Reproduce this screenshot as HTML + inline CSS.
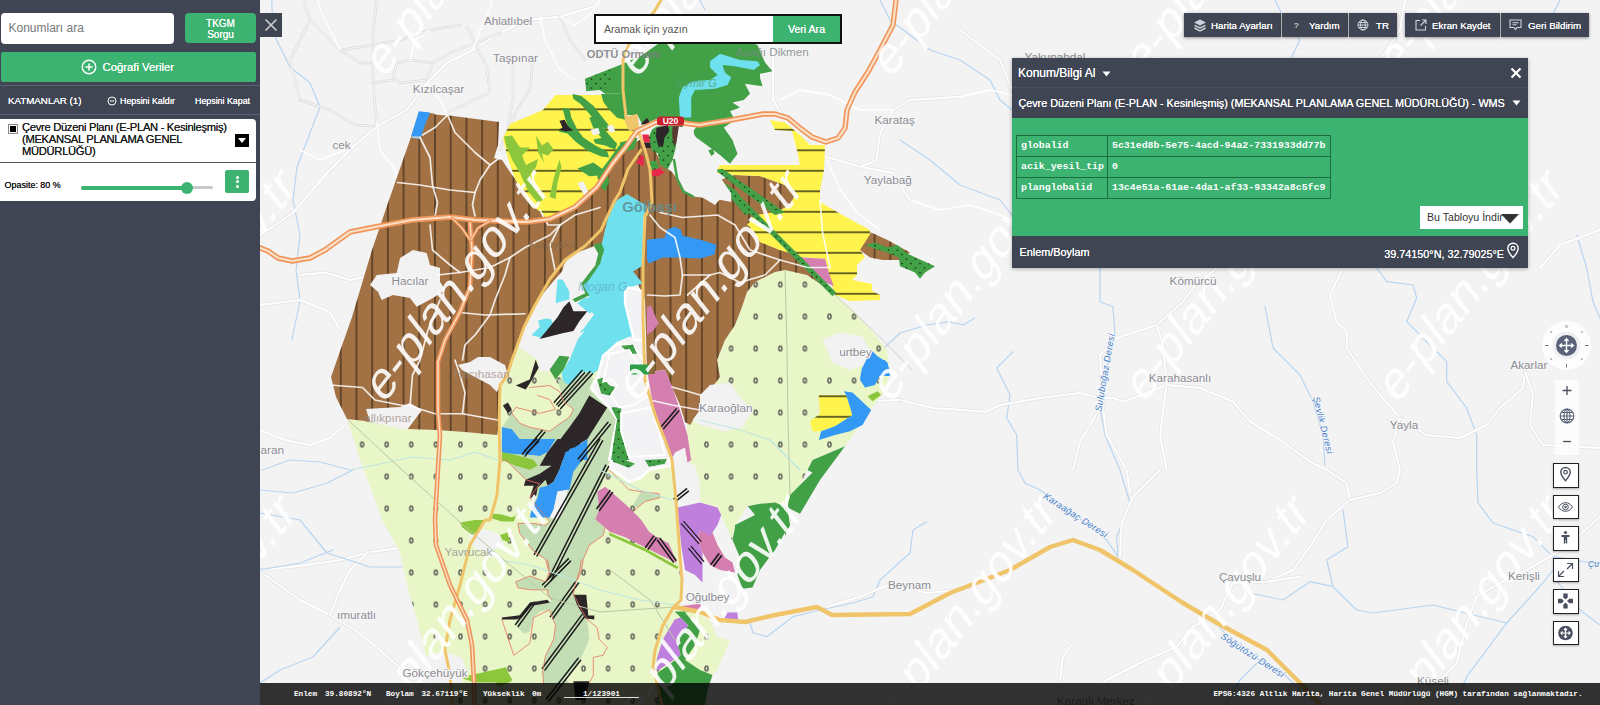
<!DOCTYPE html>
<html lang="tr">
<head>
<meta charset="utf-8">
<title>HGM Atlas</title>
<style>
*{box-sizing:border-box;margin:0;padding:0}
html,body{width:1600px;height:705px;overflow:hidden;background:#f4f3f4;font-family:"Liberation Sans",Arial,sans-serif;}
#app{position:relative;width:1600px;height:705px;overflow:hidden}
#map{position:absolute;left:0;top:0;width:1600px;height:705px}
.abs{position:absolute}
#side{position:absolute;left:0;top:0;width:260px;height:705px;background:#3f4553;color:#fff}
#q{position:absolute;left:1px;top:13px;width:173px;height:31px;background:#fff;border-radius:4px;color:#777;font-size:12px;line-height:31px;padding-left:7.5px}
#tkgm{position:absolute;left:185px;top:13px;width:71px;height:30px;background:#3cb371;border-radius:4px;color:#fff;font-size:10px;line-height:11.3px;text-align:center;padding-top:4.5px;text-shadow:0 0 .5px #fff}
#cv{position:absolute;left:1px;top:52px;width:255px;height:30px;background:#3cb371;border-radius:2px;color:#fff;font-size:11.3px;line-height:30px;text-shadow:0 0 .5px #fff}
.sep{position:absolute;left:0;width:260px;height:1px;background:#596070}
.hd{position:absolute;top:95px;font-size:9.75px;line-height:12px;color:#fff;white-space:nowrap;text-shadow:0 0 .6px #fff}
#card{position:absolute;left:0;top:119px;width:256px;height:82px;background:#fff;border-radius:0 4px 4px 0;color:#111}
#card .t{position:absolute;left:22px;top:3.4px;width:212px;font-size:11.2px;line-height:11.7px;color:#1a1a1a;letter-spacing:-.3px;text-shadow:0 0 .4px #333}
#card .cb{position:absolute;left:8px;top:5px;width:10px;height:10px;border:1px solid #888;background:#fff}
#card .cb i{position:absolute;left:1px;top:1px;width:6px;height:6px;background:#000;display:block}
#card .dd{position:absolute;left:235px;top:15px;width:14px;height:13px;background:#000}
#card .dd i{position:absolute;left:3px;top:4px;width:0;height:0;border-left:4px solid transparent;border-right:4px solid transparent;border-top:5px solid #fff}
#card .ln{position:absolute;left:0;top:43px;width:256px;height:1px;background:#555}
#card .op{position:absolute;left:4.6px;top:61.3px;font-size:8.95px;line-height:10px;color:#111;white-space:nowrap;text-shadow:0 0 .4px #333}
#card .tr{position:absolute;left:81px;top:67px;width:132px;height:3px;border-radius:2px;background:#c8c8c8}
#card .tf{position:absolute;left:81px;top:66.5px;width:106px;height:4px;border-radius:2px;background:#3cb371}
#card .th{position:absolute;left:181px;top:62.5px;width:12px;height:12px;border-radius:6px;background:#3cb371}
#card .mb{position:absolute;left:225px;top:51px;width:24px;height:23px;border-radius:2px;background:#3cb371}
#card .mb i{position:absolute;left:10.5px;width:3px;height:3px;border-radius:2px;background:#fff;display:block}
#x{position:absolute;left:260px;top:13px;width:22px;height:24px;background:#3f4553}
#ts{position:absolute;left:594px;top:14px;width:248px;height:30px;border:2px solid #111;background:#fff}
#ts .in{position:absolute;left:0;top:0;width:177px;height:26px;font-size:10.6px;line-height:26px;color:#555;padding-left:8px}
#ts .bt{position:absolute;left:177px;top:0;width:67px;height:26px;background:#3cb371;color:#fff;font-size:10.6px;line-height:26px;text-align:center;text-shadow:0 0 .6px #fff}
.tb{position:absolute;top:13px;height:24px;background:#3f4553;color:#fff;font-size:9.75px;line-height:24px;white-space:nowrap;text-shadow:0 0 .6px #fff;box-shadow:0 1px 3px rgba(0,0,0,.4)}
.tb span{position:absolute;top:1.2px}
.tb svg{position:absolute}
#pn{position:absolute;left:1012px;top:57.5px;width:516px;height:210px;background:#3cb371;box-shadow:0 1px 4px rgba(0,0,0,.3);color:#fff}
#pn .r1{position:absolute;left:0;top:0;width:516px;height:30px;background:#3f4553;border-bottom:1px solid #4a505e}
#pn .r2{position:absolute;left:0;top:30px;width:516px;height:30px;background:#3f4553}
#pn .r3{position:absolute;left:0;top:178px;width:516px;height:32px;background:#3f4553}
#pn .tx{position:absolute;font-size:12px;line-height:14px;white-space:nowrap;color:#fff;text-shadow:0 0 .5px #fff}
#pn table{position:absolute;left:4px;top:77px;border-collapse:collapse;font-family:"Liberation Mono","DejaVu Sans Mono",monospace;font-size:9.9px;color:#fff}
#pn td{border:1px solid #1f6b40;height:21px;padding:0 0 0 4px;white-space:nowrap;vertical-align:middle}
#pn td.k{width:91px;font-weight:bold}
#pn td.v{width:223px;font-weight:bold}
#pn .dl{position:absolute;left:408px;top:148px;width:103px;height:23px;background:#fff;color:#333;font-size:10.6px;line-height:23px;padding-left:7px;white-space:nowrap;overflow:hidden}
#bb{position:absolute;left:260px;top:683px;width:1340px;height:22px;background:rgba(0,0,0,.8);color:#fff;font-family:"Liberation Mono","DejaVu Sans Mono",monospace;font-size:7.7px;line-height:22px;font-weight:bold;white-space:nowrap}
#bb span{position:absolute;top:-0.5px}
.rb{position:absolute;left:1553px;width:26px;height:24.5px;background:#fff;border:1.5px solid #222;box-shadow:0 1px 2px rgba(0,0,0,.3)}
.rb svg{position:absolute;left:0;top:0}
#zm{position:absolute;left:1555px;top:380px;width:24px;height:75px;background:rgba(255,255,255,.75)}
#cp{position:absolute;left:1542px;top:321px;width:49px;height:49px;border-radius:25px;background:rgba(255,255,255,.8)}
</style>
</head>
<body>
<div id="app">
<svg id="map" width="1600" height="705" viewBox="0 0 1600 705" font-family="Liberation Sans, Arial, sans-serif">
<defs>
<pattern id="hv" patternUnits="userSpaceOnUse" x="356.5" y="0" width="15.7" height="20"><rect x="-0.6" y="0" width="1.2" height="20" fill="#3a2a18"/><rect x="15.1" y="0" width="1.2" height="20" fill="#3a2a18"/></pattern>
<pattern id="hh" patternUnits="userSpaceOnUse" x="0" y="109.3" width="20" height="20.5"><rect x="0" y="-0.7" width="20" height="1.4" fill="#2a2a10"/><rect x="0" y="19.8" width="20" height="1.4" fill="#2a2a10"/></pattern>
<pattern id="dots" patternUnits="userSpaceOnUse" x="374.4" y="268.5" width="24.6" height="32"><ellipse cx="12.3" cy="16" rx="1.6" ry="2.3" fill="none" stroke="#404040" stroke-width="1.2"/></pattern>
<pattern id="gd" patternUnits="userSpaceOnUse" x="0" y="0" width="9" height="9"><circle cx="2" cy="2.5" r="0.85" fill="#16301a"/><circle cx="6.5" cy="7" r="0.85" fill="#16301a"/></pattern>
</defs>
<rect width="1600" height="705" fill="#f4f3f4"/>
<polyline points="271.7,0 273,33 290,67 310,83 320,107 310,133 297,167 293,200 300,235 296,270 300,300 292,340" fill="none" stroke="#b7d5f0" stroke-width="1.2" stroke-linejoin="round" stroke-linecap="round" />
<polyline points="1100,268 1100,301.7 1113,306.7 1115,335 1106.7,368 1100,408 1105,435 1120,470 1130,503 1116.7,536.7 1118,556.7" fill="none" stroke="#b7d5f0" stroke-width="1.2" stroke-linejoin="round" stroke-linecap="round" />
<polyline points="1013,351.7 996.7,368 1010,395 1006.7,418 1016.7,435 1018,470 1025,483 1040,490 1073,513 1106.7,540 1118,556.7" fill="none" stroke="#b7d5f0" stroke-width="1.2" stroke-linejoin="round" stroke-linecap="round" />
<polyline points="880,352 900,333 926.7,325 950,321.7 963,325 975,318" fill="none" stroke="#b7d5f0" stroke-width="1.2" stroke-linejoin="round" stroke-linecap="round" />
<polyline points="1376.7,268 1386.7,281.7 1413,285 1416.7,298 1406.7,321.7 1426.7,341.7 1446.7,361.7 1446.7,381.7 1466.7,408 1476.7,435 1476.7,470 1478,503 1493,523 1533,536.7 1553,556.7 1593,563 1600,563" fill="none" stroke="#b7d5f0" stroke-width="1.2" stroke-linejoin="round" stroke-linecap="round" />
<polyline points="1265,306.7 1273,348 1286.7,361.7 1300,375 1313,401.7 1323,435 1325,465" fill="none" stroke="#b7d5f0" stroke-width="1.2" stroke-linejoin="round" stroke-linecap="round" />
<polyline points="1576.7,235 1586.7,268 1593,301.7 1600,318" fill="none" stroke="#b7d5f0" stroke-width="1.2" stroke-linejoin="round" stroke-linecap="round" />
<polyline points="1343,510 1348,546.7 1326.7,560 1333,586.7 1356.7,610 1373,613 1433,605 1453,610 1506.7,623" fill="none" stroke="#b7d5f0" stroke-width="1.2" stroke-linejoin="round" stroke-linecap="round" />
<polyline points="1250,593 1283,600 1310,581.7 1333,586.7" fill="none" stroke="#b7d5f0" stroke-width="1.2" stroke-linejoin="round" stroke-linecap="round" />
<polyline points="1553,570 1543,583 1506.7,623 1466.7,676.7 1455,705" fill="none" stroke="#b7d5f0" stroke-width="1.2" stroke-linejoin="round" stroke-linecap="round" />
<polyline points="1553,556.7 1556,580 1580,610 1600,625" fill="none" stroke="#b7d5f0" stroke-width="1.2" stroke-linejoin="round" stroke-linecap="round" />
<polyline points="926.7,521.7 913,530 910,553 880,580 873,596.7 853,603 820,610 793,616.7 766.7,636.7 753,633 750,623" fill="none" stroke="#b7d5f0" stroke-width="1.2" stroke-linejoin="round" stroke-linecap="round" />
<polyline points="1218,625 1230,640 1250,655 1280,670 1300,690" fill="none" stroke="#b7d5f0" stroke-width="1.2" stroke-linejoin="round" stroke-linecap="round" />
<polyline points="1545,30 1560,0" fill="none" stroke="#b7d5f0" stroke-width="1.2" stroke-linejoin="round" stroke-linecap="round" />
<polyline points="1275,0 1285,20 1300,40 1290,60 1270,72" fill="none" stroke="#b7d5f0" stroke-width="1.2" stroke-linejoin="round" stroke-linecap="round" />
<polyline points="880,0 890,20 930,50 960,60 990,80 1000,100 1012,110" fill="none" stroke="#b7d5f0" stroke-width="1.2" stroke-linejoin="round" stroke-linecap="round" />
<polyline points="900,140 930,160 960,185 1000,200 1020,225" fill="none" stroke="#b7d5f0" stroke-width="1.2" stroke-linejoin="round" stroke-linecap="round" />
<polyline points="700,0 705,10" fill="none" stroke="#b7d5f0" stroke-width="1.2" stroke-linejoin="round" stroke-linecap="round" />
<polyline points="1260,660 1240,680 1225,705" fill="none" stroke="#b7d5f0" stroke-width="1.2" stroke-linejoin="round" stroke-linecap="round" />
<polyline points="900,400 933,408 986.7,411.7 1000,405 1040,398 1080,393 1100,398 1113,398 1123,401.7 1166.7,385 1200,388 1233,401.7 1250,421.7 1283,441.7 1310,461.7 1326.7,470 1346.7,483 1350,500 1326.7,520 1310,546.7 1293,570 1266.7,581.7 1233,583 1220,610 1200,623 1193,626.7 1176.7,646.7 1140,663 1106.7,680 1080,705" fill="none" stroke="#e4e3e6" stroke-width="3.4" stroke-linejoin="round" stroke-linecap="round" />
<polyline points="900,400 933,408 986.7,411.7 1000,405 1040,398 1080,393 1100,398 1113,398 1123,401.7 1166.7,385 1200,388 1233,401.7 1250,421.7 1283,441.7 1310,461.7 1326.7,470 1346.7,483 1350,500 1326.7,520 1310,546.7 1293,570 1266.7,581.7 1233,583 1220,610 1200,623 1193,626.7 1176.7,646.7 1140,663 1106.7,680 1080,705" fill="none" stroke="#ffffff" stroke-width="2.0" stroke-linejoin="round" stroke-linecap="round" />
<polyline points="1216.7,268 1193,288 1183,301.7 1156.7,325 1116.7,338 1100,355 1103,401.7 1100,408 1080,441.7 1073,470" fill="none" stroke="#e4e3e6" stroke-width="3.4" stroke-linejoin="round" stroke-linecap="round" />
<polyline points="1216.7,268 1193,288 1183,301.7 1156.7,325 1116.7,338 1100,355 1103,401.7 1100,408 1080,441.7 1073,470" fill="none" stroke="#ffffff" stroke-width="2.0" stroke-linejoin="round" stroke-linecap="round" />
<polyline points="1156.7,325 1163,345 1166.7,385 1160,435 1166.7,470" fill="none" stroke="#e4e3e6" stroke-width="3.4" stroke-linejoin="round" stroke-linecap="round" />
<polyline points="1156.7,325 1163,345 1166.7,385 1160,435 1166.7,470" fill="none" stroke="#ffffff" stroke-width="2.0" stroke-linejoin="round" stroke-linecap="round" />
<polyline points="1103,408 1106.7,435 1126.7,470" fill="none" stroke="#e4e3e6" stroke-width="3.4" stroke-linejoin="round" stroke-linecap="round" />
<polyline points="1103,408 1106.7,435 1126.7,470" fill="none" stroke="#ffffff" stroke-width="2.0" stroke-linejoin="round" stroke-linecap="round" />
<polyline points="1343,268 1330,295 1336.7,321.7 1346.7,331.7 1346.7,348 1366.7,378 1380,395 1400,418 1426.7,435 1460,438 1486.7,425 1500,408 1523,388 1525,371.7" fill="none" stroke="#e4e3e6" stroke-width="3.4" stroke-linejoin="round" stroke-linecap="round" />
<polyline points="1343,268 1330,295 1336.7,321.7 1346.7,331.7 1346.7,348 1366.7,378 1380,395 1400,418 1426.7,435 1460,438 1486.7,425 1500,408 1523,388 1525,371.7" fill="none" stroke="#ffffff" stroke-width="2.0" stroke-linejoin="round" stroke-linecap="round" />
<polyline points="1525,371.7 1533,395 1530,425 1543,445 1600,448" fill="none" stroke="#e4e3e6" stroke-width="3.4" stroke-linejoin="round" stroke-linecap="round" />
<polyline points="1525,371.7 1533,395 1530,425 1543,445 1600,448" fill="none" stroke="#ffffff" stroke-width="2.0" stroke-linejoin="round" stroke-linecap="round" />
<polyline points="1400,418 1393,441.7 1400,470 1396.7,483 1380,493 1350,500" fill="none" stroke="#e4e3e6" stroke-width="3.4" stroke-linejoin="round" stroke-linecap="round" />
<polyline points="1400,418 1393,441.7 1400,470 1396.7,483 1380,493 1350,500" fill="none" stroke="#ffffff" stroke-width="2.0" stroke-linejoin="round" stroke-linecap="round" />
<polyline points="1600,516.7 1566.7,546.7 1533,566.7 1500,583 1476.7,596.7 1466.7,623 1456.7,663 1440,680 1420,705" fill="none" stroke="#e4e3e6" stroke-width="3.4" stroke-linejoin="round" stroke-linecap="round" />
<polyline points="1600,516.7 1566.7,546.7 1533,566.7 1500,583 1476.7,596.7 1466.7,623 1456.7,663 1440,680 1420,705" fill="none" stroke="#ffffff" stroke-width="2.0" stroke-linejoin="round" stroke-linecap="round" />
<polyline points="1160,470 1133,496.7 1121.7,523 1120,556.7" fill="none" stroke="#e4e3e6" stroke-width="3.4" stroke-linejoin="round" stroke-linecap="round" />
<polyline points="1160,470 1133,496.7 1121.7,523 1120,556.7" fill="none" stroke="#ffffff" stroke-width="2.0" stroke-linejoin="round" stroke-linecap="round" />
<polyline points="1126.7,470 1130,493" fill="none" stroke="#e4e3e6" stroke-width="3.4" stroke-linejoin="round" stroke-linecap="round" />
<polyline points="1126.7,470 1130,493" fill="none" stroke="#ffffff" stroke-width="2.0" stroke-linejoin="round" stroke-linecap="round" />
<polyline points="1300,576.7 1266.7,581.7" fill="none" stroke="#e4e3e6" stroke-width="3.4" stroke-linejoin="round" stroke-linecap="round" />
<polyline points="1300,576.7 1266.7,581.7" fill="none" stroke="#ffffff" stroke-width="2.0" stroke-linejoin="round" stroke-linecap="round" />
<polyline points="1073,643 1063,656.7 1060,680" fill="none" stroke="#e4e3e6" stroke-width="3.4" stroke-linejoin="round" stroke-linecap="round" />
<polyline points="1073,643 1063,656.7 1060,680" fill="none" stroke="#ffffff" stroke-width="2.0" stroke-linejoin="round" stroke-linecap="round" />
<polyline points="960,590 926.7,593 893,583 860,596.7 826.7,606.7" fill="none" stroke="#e4e3e6" stroke-width="3.4" stroke-linejoin="round" stroke-linecap="round" />
<polyline points="960,590 926.7,593 893,583 860,596.7 826.7,606.7" fill="none" stroke="#ffffff" stroke-width="2.0" stroke-linejoin="round" stroke-linecap="round" />
<polyline points="1000,575 960,590" fill="none" stroke="#e4e3e6" stroke-width="3.4" stroke-linejoin="round" stroke-linecap="round" />
<polyline points="1000,575 960,590" fill="none" stroke="#ffffff" stroke-width="2.0" stroke-linejoin="round" stroke-linecap="round" />
<polyline points="840,402 900,400" fill="none" stroke="#e4e3e6" stroke-width="3.4" stroke-linejoin="round" stroke-linecap="round" />
<polyline points="840,402 900,400" fill="none" stroke="#ffffff" stroke-width="2.0" stroke-linejoin="round" stroke-linecap="round" />
<polyline points="773,50 773,100 793,133 826.7,156.7 860,166.7 893,173 910,200" fill="none" stroke="#e4e3e6" stroke-width="3.4" stroke-linejoin="round" stroke-linecap="round" />
<polyline points="773,50 773,100 793,133 826.7,156.7 860,166.7 893,173 910,200" fill="none" stroke="#ffffff" stroke-width="2.0" stroke-linejoin="round" stroke-linecap="round" />
<polyline points="960,96.7 910,100 893,110 880,133 876.7,160 860,166.7" fill="none" stroke="#e4e3e6" stroke-width="3.4" stroke-linejoin="round" stroke-linecap="round" />
<polyline points="960,96.7 910,100 893,110 880,133 876.7,160 860,166.7" fill="none" stroke="#ffffff" stroke-width="2.0" stroke-linejoin="round" stroke-linecap="round" />
<polyline points="260,235 293,213 326.7,173 353,146.7 376.7,126.7 406.7,110 426.7,83 446.7,63 473,50 500,33 526.7,20 560,16.7 593,6.7" fill="none" stroke="#e4e3e6" stroke-width="3.4" stroke-linejoin="round" stroke-linecap="round" />
<polyline points="260,235 293,213 326.7,173 353,146.7 376.7,126.7 406.7,110 426.7,83 446.7,63 473,50 500,33 526.7,20 560,16.7 593,6.7" fill="none" stroke="#ffffff" stroke-width="2.0" stroke-linejoin="round" stroke-linecap="round" />
<polyline points="300,275 325,272.5 350,280 375,275" fill="none" stroke="#e4e3e6" stroke-width="3.4" stroke-linejoin="round" stroke-linecap="round" />
<polyline points="300,275 325,272.5 350,280 375,275" fill="none" stroke="#ffffff" stroke-width="2.0" stroke-linejoin="round" stroke-linecap="round" />
<polyline points="260,305 300,300 330,312 340,330" fill="none" stroke="#e4e3e6" stroke-width="3.4" stroke-linejoin="round" stroke-linecap="round" />
<polyline points="260,305 300,300 330,312 340,330" fill="none" stroke="#ffffff" stroke-width="2.0" stroke-linejoin="round" stroke-linecap="round" />
<polyline points="260,430 285,440 310,445 330,438 345,425" fill="none" stroke="#e4e3e6" stroke-width="3.4" stroke-linejoin="round" stroke-linecap="round" />
<polyline points="260,430 285,440 310,445 330,438 345,425" fill="none" stroke="#ffffff" stroke-width="2.0" stroke-linejoin="round" stroke-linecap="round" />
<polyline points="260,570 300,566 340,560 370,552 400,548 436,550" fill="none" stroke="#e4e3e6" stroke-width="3.4" stroke-linejoin="round" stroke-linecap="round" />
<polyline points="260,570 300,566 340,560 370,552 400,548 436,550" fill="none" stroke="#ffffff" stroke-width="2.0" stroke-linejoin="round" stroke-linecap="round" />
<polyline points="265,575 300,600 330,615 355,630 380,650 400,668" fill="none" stroke="#e4e3e6" stroke-width="3.4" stroke-linejoin="round" stroke-linecap="round" />
<polyline points="265,575 300,600 330,615 355,630 380,650 400,668" fill="none" stroke="#ffffff" stroke-width="2.0" stroke-linejoin="round" stroke-linecap="round" />
<polyline points="330,615 340,590 350,570 368,552" fill="none" stroke="#e4e3e6" stroke-width="3.4" stroke-linejoin="round" stroke-linecap="round" />
<polyline points="330,615 340,590 350,570 368,552" fill="none" stroke="#ffffff" stroke-width="2.0" stroke-linejoin="round" stroke-linecap="round" />
<polyline points="1405,0 1400,30 1380,60" fill="none" stroke="#e4e3e6" stroke-width="3.4" stroke-linejoin="round" stroke-linecap="round" />
<polyline points="1405,0 1400,30 1380,60" fill="none" stroke="#ffffff" stroke-width="2.0" stroke-linejoin="round" stroke-linecap="round" />
<polyline points="960,30 1000,60 1012,90" fill="none" stroke="#e4e3e6" stroke-width="3.4" stroke-linejoin="round" stroke-linecap="round" />
<polyline points="960,30 1000,60 1012,90" fill="none" stroke="#ffffff" stroke-width="2.0" stroke-linejoin="round" stroke-linecap="round" />
<polyline points="1420,150 1400,180 1380,200 1370,268" fill="none" stroke="#e4e3e6" stroke-width="3.4" stroke-linejoin="round" stroke-linecap="round" />
<polyline points="1420,150 1400,180 1380,200 1370,268" fill="none" stroke="#ffffff" stroke-width="2.0" stroke-linejoin="round" stroke-linecap="round" />
<polyline points="1600,230 1560,245 1540,268" fill="none" stroke="#e4e3e6" stroke-width="3.4" stroke-linejoin="round" stroke-linecap="round" />
<polyline points="1600,230 1560,245 1540,268" fill="none" stroke="#ffffff" stroke-width="2.0" stroke-linejoin="round" stroke-linecap="round" />
<polyline points="303,0 310,20 340,50 360,63 370,63" fill="none" stroke="#d9d9dc" stroke-width="2.4" stroke-linejoin="round" stroke-linecap="round" />
<polyline points="303,0 310,20 340,50 360,63 370,63" fill="none" stroke="#f6f6f7" stroke-width="1.2" stroke-linejoin="round" stroke-linecap="round" />
<polyline points="376.7,0 373,33 373,83 376.7,123" fill="none" stroke="#d9d9dc" stroke-width="2.4" stroke-linejoin="round" stroke-linecap="round" />
<polyline points="376.7,0 373,33 373,83 376.7,123" fill="none" stroke="#f6f6f7" stroke-width="1.2" stroke-linejoin="round" stroke-linecap="round" />
<polyline points="396.7,63 410,60 433,63 426.7,80 400,83 393,76.7 396.7,63" fill="none" stroke="#d9d9dc" stroke-width="2.4" stroke-linejoin="round" stroke-linecap="round" />
<polyline points="396.7,63 410,60 433,63 426.7,80 400,83 393,76.7 396.7,63" fill="none" stroke="#f6f6f7" stroke-width="1.2" stroke-linejoin="round" stroke-linecap="round" />
<polyline points="466.7,26.7 486.7,66.7 490,93 473,100 446.7,113" fill="none" stroke="#d9d9dc" stroke-width="2.4" stroke-linejoin="round" stroke-linecap="round" />
<polyline points="466.7,26.7 486.7,66.7 490,93 473,100 446.7,113" fill="none" stroke="#f6f6f7" stroke-width="1.2" stroke-linejoin="round" stroke-linecap="round" />
<polyline points="450,53 500,33" fill="none" stroke="#d9d9dc" stroke-width="2.4" stroke-linejoin="round" stroke-linecap="round" />
<polyline points="450,53 500,33" fill="none" stroke="#f6f6f7" stroke-width="1.2" stroke-linejoin="round" stroke-linecap="round" />
<polyline points="533,60 530,90 516.7,110 506.7,133 500,150" fill="none" stroke="#d9d9dc" stroke-width="2.4" stroke-linejoin="round" stroke-linecap="round" />
<polyline points="533,60 530,90 516.7,110 506.7,133 500,150" fill="none" stroke="#f6f6f7" stroke-width="1.2" stroke-linejoin="round" stroke-linecap="round" />
<polyline points="513,60 513,100 506.7,133" fill="none" stroke="#d9d9dc" stroke-width="2.4" stroke-linejoin="round" stroke-linecap="round" />
<polyline points="513,60 513,100 506.7,133" fill="none" stroke="#f6f6f7" stroke-width="1.2" stroke-linejoin="round" stroke-linecap="round" />
<polyline points="340,50 373,45 400,40 430,30 460,25" fill="none" stroke="#d9d9dc" stroke-width="2.4" stroke-linejoin="round" stroke-linecap="round" />
<polyline points="340,50 373,45 400,40 430,30 460,25" fill="none" stroke="#f6f6f7" stroke-width="1.2" stroke-linejoin="round" stroke-linecap="round" />
<polyline points="373,83 393,80" fill="none" stroke="#d9d9dc" stroke-width="2.4" stroke-linejoin="round" stroke-linecap="round" />
<polyline points="373,83 393,80" fill="none" stroke="#f6f6f7" stroke-width="1.2" stroke-linejoin="round" stroke-linecap="round" />
<polyline points="433,63 450,53" fill="none" stroke="#d9d9dc" stroke-width="2.4" stroke-linejoin="round" stroke-linecap="round" />
<polyline points="433,63 450,53" fill="none" stroke="#f6f6f7" stroke-width="1.2" stroke-linejoin="round" stroke-linecap="round" />
<polyline points="560,16.7 570,40 585,60" fill="none" stroke="#d9d9dc" stroke-width="2.4" stroke-linejoin="round" stroke-linecap="round" />
<polyline points="560,16.7 570,40 585,60" fill="none" stroke="#f6f6f7" stroke-width="1.2" stroke-linejoin="round" stroke-linecap="round" />
<polyline points="300,100 330,110 355,125 376,126" fill="none" stroke="#d9d9dc" stroke-width="2.4" stroke-linejoin="round" stroke-linecap="round" />
<polyline points="300,100 330,110 355,125 376,126" fill="none" stroke="#f6f6f7" stroke-width="1.2" stroke-linejoin="round" stroke-linecap="round" />
<polyline points="310,20 300,40 290,60 300,100" fill="none" stroke="#d9d9dc" stroke-width="2.4" stroke-linejoin="round" stroke-linecap="round" />
<polyline points="310,20 300,40 290,60 300,100" fill="none" stroke="#f6f6f7" stroke-width="1.2" stroke-linejoin="round" stroke-linecap="round" />
<polyline points="260,490 293,493 327,483 353,470" fill="none" stroke="#b7d5f0" stroke-width="1.2" stroke-linejoin="round" stroke-linecap="round" />
<polyline points="260,513 300,520 327,553 370,567 407,567" fill="none" stroke="#b7d5f0" stroke-width="1.2" stroke-linejoin="round" stroke-linecap="round" />
<polyline points="260,570 300,563 333,550" fill="none" stroke="#b7d5f0" stroke-width="1.2" stroke-linejoin="round" stroke-linecap="round" />
<polyline points="340,627 313,657 280,670 260,683" fill="none" stroke="#b7d5f0" stroke-width="1.2" stroke-linejoin="round" stroke-linecap="round" />
<polyline points="262,470 290,460 320,462 350,470" fill="none" stroke="#b7d5f0" stroke-width="1.2" stroke-linejoin="round" stroke-linecap="round" />
<polyline points="300,150 320,160 345,150 353,147" fill="none" stroke="#ffffff" stroke-width="1.4" stroke-linejoin="round" stroke-linecap="round" />
<polyline points="376.7,123 380,150 395,170 400,190" fill="none" stroke="#ffffff" stroke-width="1.4" stroke-linejoin="round" stroke-linecap="round" />
<polyline points="540,16 545,40 560,70 575,80" fill="none" stroke="#ffffff" stroke-width="1.4" stroke-linejoin="round" stroke-linecap="round" />
<polyline points="426.7,83 440,100 446.7,113" fill="none" stroke="#ffffff" stroke-width="1.4" stroke-linejoin="round" stroke-linecap="round" />
<polyline points="473,50 480,30 490,10 492,0" fill="none" stroke="#ffffff" stroke-width="1.4" stroke-linejoin="round" stroke-linecap="round" />
<polyline points="410,60 415,40 430,30" fill="none" stroke="#ffffff" stroke-width="1.4" stroke-linejoin="round" stroke-linecap="round" />
<polyline points="340,50 330,30 320,10 318,0" fill="none" stroke="#ffffff" stroke-width="1.4" stroke-linejoin="round" stroke-linecap="round" />
<polyline points="600,0 590,15 575,25 560,17" fill="none" stroke="#ffffff" stroke-width="1.4" stroke-linejoin="round" stroke-linecap="round" />
<polyline points="780,100 800,90 830,95 860,110 893,110" fill="none" stroke="#ffffff" stroke-width="1.4" stroke-linejoin="round" stroke-linecap="round" />
<polyline points="826,157 840,190 860,215 880,230" fill="none" stroke="#ffffff" stroke-width="1.4" stroke-linejoin="round" stroke-linecap="round" />
<polyline points="910,200 940,210 970,205 1000,215 1012,220" fill="none" stroke="#ffffff" stroke-width="1.4" stroke-linejoin="round" stroke-linecap="round" />
<polyline points="960,97 990,90 1012,95" fill="none" stroke="#ffffff" stroke-width="1.4" stroke-linejoin="round" stroke-linecap="round" />
<polygon points="347,419 365,421 407,429 437,430 465,432 497,435 499,422 500,385 507,360 514,345 560,360 645,380 660,432 672,460 675,485 677,510 680,557 682,590 678,605 700,615 710,620 717,637 730,640 725,652 717,670 712,675 707,690 703,705 440,705 435,682 427,660 417,620 407,585 400,552 382,520 375,500 360,460" fill="#e9f6c8" />
<polygon points="347,419 365,421 407,429 437,430 465,432 497,435 499,422 500,385 507,360 514,345 560,360 645,380 660,432 672,460 675,485 677,510 680,557 682,590 678,605 700,615 710,620 717,637 730,640 725,652 717,670 712,675 707,690 703,705 440,705 435,682 427,660 417,620 407,585 400,552 382,520 375,500 360,460" fill="url(#dots)" />
<polygon points="747,292 755,282 775,272 785,270 807,275 832,292 853,310 872,331 887,350 890,372 884,392 870,410 850,440 845,446 812,460 800,485 787,507 760,504 747,506 735,527 732,540 721,515 717,507 700,502 700,485 695,465 687,462 687,425 700,410 710,390 720,377 717,360 725,340 735,325 742,307" fill="#e9f6c8" />
<polygon points="747,292 755,282 775,272 785,270 807,275 832,292 853,310 872,331 887,350 890,372 884,392 870,410 850,440 845,446 812,460 800,485 787,507 760,504 747,506 735,527 732,540 721,515 717,507 700,502 700,485 695,465 687,462 687,425 700,410 710,390 720,377 717,360 725,340 735,325 742,307" fill="url(#dots)" />
<polygon points="557.5,379.6 573.4,377.6 589.3,371.6 593.3,379.6 589.3,389.5 609.2,407.4 617.1,419.3 613.1,439.2 609.2,460 543.6,460 529.7,459 501.9,453.1 501.9,427.2 511.8,413.3 519.8,423.3 529.7,427.2 549.6,431.2 557.5,425.3 569.4,417.3 573.4,409.4 563.5,399.4" fill="#c3ddb4" />
<polygon points="501.9,451.9 609.2,438 609.2,459.9 607.2,469.8 601.2,485.7 597.2,491.6 599.2,509.5 595.3,519.4 605.2,527.4 603.2,535.3 589.3,545.3 583.3,559.2 581.4,571.1 577.4,580 547.6,580 549.6,575.1 545.6,559.2 533.7,551.2 519.8,533.3 517.8,523.4 533.7,523.4 545.6,525.4 549.6,521.4 529.7,497.6 539.7,483.7 525.7,479.7 505.9,459.9" fill="#c3ddb4" />
<polygon points="640.9,492 658.8,493.6 659.8,497.6 644.9,501.6 637,507.5 633,505.5" fill="#c3ddb4" />
<polygon points="547.6,559 581.4,559 579.4,571.9 575.4,583.8 573.4,593.8 581.4,609.7 587.3,619.6 589.3,639.4 583.3,653.3 577.4,665.3 565.5,677.2 569.4,684.1 543.6,684.1 542.6,671.2 545.6,655.3 553.6,639.4 555.5,625.5 551.6,615.6 549.6,605.7 551.6,599.7 547.6,593.8 545.6,581.8 549.6,571.9" fill="#c3ddb4" />
<polygon points="515.8,581.8 529.7,575.9 545.6,581.8 547.6,589.8 529.7,589.8 517.8,587.8" fill="#c3ddb4" />
<polygon points="515.8,617.6 529.7,603.7 541.6,599.7 551.6,601.7 549.6,609.7 539.7,611.6 533.7,617.6 529.7,631.5 523.8,633.5 517.8,627.5" fill="#c3ddb4" />
<polygon points="419,112 430,113 499,122 498,145 494,158 502,160 512,175 537,207 560,212 575,205 595,187 612,165 622,148 640,140 655,150 662,165 672,172 678,180 700,196 715,205 722,197 720,180 735,175 760,176 785,185 795,195 790,205 777,212 760,242 780,250 802,257 815,272 826,282 832,292 807,275 785,270 775,272 755,282 747,292 742,307 735,325 725,340 717,360 720,377 710,390 700,395 700,410 690,425 685,422 680,405 672,387 665,370 647,372 645,300 632,270 645,237 645,215 622,200 612,215 605,230 602,250 595,275 570,262 540,297 525,325 512,360 507,376 500,385 499,422 497,435 465,432 437,430 407,429 365,421 347,419 336,397 331,377 352,317 372,250 389,200 411,137" fill="#a27245" />
<polygon points="419,112 430,113 499,122 498,145 494,158 502,160 512,175 537,207 560,212 575,205 595,187 612,165 622,148 640,140 655,150 662,165 672,172 678,180 700,196 715,205 722,197 720,180 735,175 760,176 785,185 795,195 790,205 777,212 760,242 780,250 802,257 815,272 826,282 832,292 807,275 785,270 775,272 755,282 747,292 742,307 735,325 725,340 717,360 720,377 710,390 700,395 700,410 690,425 685,422 680,405 672,387 665,370 647,372 645,300 632,270 645,237 645,215 622,200 612,215 605,230 602,250 595,275 570,262 540,297 525,325 512,360 507,376 500,385 499,422 497,435 465,432 437,430 407,429 365,421 347,419 336,397 331,377 352,317 372,250 389,200 411,137" fill="url(#hv)" />
<polygon points="555.5,95 622,95 625,120 637,130 625,150 613,163 597,187 575,209 550,219 545,217 530,203 516,181 508,159 503,138 510,124 543,110" fill="#fff34d" />
<polygon points="555.5,95 622,95 625,120 637,130 625,150 613,163 597,187 575,209 550,219 545,217 530,203 516,181 508,159 503,138 510,124 543,110" fill="url(#hh)" />
<polygon points="504,136.6 512,135.6 520,147.5 530,147.5 522,155.5 526,165 538,159 536,167 530,175 536,191 544,199 538,203 528,191 520,173 512,159.4 506,145.5" fill="#8bc63c" />
<polygon points="536,135.6 542,145.5 548,141.5 553.5,149.5 548,155.5 542,153.5 544,163 538,152" fill="#8bc63c" />
<polygon points="559.5,159.4 561.5,167 557.5,183 555.5,199 549.6,197 553.5,179" fill="#8bc63c" />
<polygon points="572.4,93.9 581.4,95.9 593.3,105.8 601.2,115.7 609.2,125.7 606.2,129.7 597.2,123.7 589.3,113.8 580.4,103.8 573.4,98.9" fill="#42a046" />
<polygon points="562.5,107.8 569.4,108.8 571.4,117.7 577.4,129.7 583.3,137.6 595.3,145.5 607.2,151.5 609.2,157.5 601.2,156.5 587.3,150.5 575.4,141.6 567.5,133.6 558.5,131.6 561.5,128.7 568.5,127.7 565.5,119.7" fill="#42a046" />
<polygon points="589.3,117.7 595.3,115.7 603.2,127.7 613.1,139.6 617.1,145.5 609.2,147.5 601.2,137.6 593.3,127.7" fill="#42a046" />
<polygon points="593.3,139.6 609.2,136.6 617.1,143.6 615.1,149.5 605.2,145.5 595.3,143.6" fill="#42a046" />
<polygon points="609.2,159.4 619.1,145.5 637,137.6 633,145.5 617.1,159.4 605.2,173.3 600.2,183.3 597.2,177.3 603.2,167.4" fill="#42a046" />
<polygon points="577.4,168.4 593.3,162.4 603.2,169.4 603.2,175.3 589.3,176.3" fill="#42a046" />
<polygon points="601.2,175.3 607.2,173.3 609.2,181.3 605.2,191.2 601.2,187.2" fill="#42a046" />
<polygon points="601.2,93.9 622.1,93.9 625.1,119.7 617.1,117.7 609.2,109.8 603.2,101.8" fill="#42a046" />
<polygon points="590.3,129.7 598.2,127.7 600.2,133.6 593.3,135.6" fill="#f3f2f3" />
<polygon points="607.2,125.7 613.1,124.7 615.1,131.6 609.2,132.6" fill="#f3f2f3" />
<polygon points="577.4,183.3 583.3,181.3 589.3,193.2 585.3,197.2" fill="#f3f2f3" />
<polygon points="559.5,120.7 564.5,119.7 568.5,126.7 573.4,130.6 565.5,131.6 558.5,129.7 562.5,127.7" fill="#2c2628" />
<polygon points="770,120 785,122.5 800,135 810,145 825,145 824,170 820,190 820,202 837,212 855,222 870,230 871,242 860,250 865,257 857,265 857,275 852,280 872,284 872,291 880,295 880,300 850,301 835,295 832,285 825,259 802,257 780,250 760,242 750,227 747,225 755,215 777,212 790,205 795,195 785,185 760,176 735,175 715,173 720,165 800,165 797,150 792,131 775,130" fill="#fff34d" />
<polygon points="770,120 785,122.5 800,135 810,145 825,145 824,170 820,190 820,202 837,212 855,222 870,230 871,242 860,250 865,257 857,265 857,275 852,280 872,284 872,291 880,295 880,300 850,301 835,295 832,285 825,259 802,257 780,250 760,242 750,227 747,225 755,215 777,212 790,205 795,195 785,185 760,176 735,175 715,173 720,165 800,165 797,150 792,131 775,130" fill="url(#hh)" />
<polygon points="818.8,395 846.2,395 852.5,415 835,426.2 820,431.2 812.5,431.2 810,421.2 820,413.8" fill="#fff34d" />
<polygon points="818.8,395 846.2,395 852.5,415 835,426.2 820,431.2 812.5,431.2 810,421.2 820,413.8" fill="url(#hh)" />
<polygon points="802.5,257.5 825,258.8 828.8,272.5 833.8,286.2 826.2,282.5 815,272.5" fill="#d47fb0" />
<polygon points="860,250 871.2,232.5 887.5,240 910,252.5 900,260 882.5,260 870,257.5" fill="#a27245" />
<polygon points="860,250 871.2,232.5 887.5,240 910,252.5 900,260 882.5,260 870,257.5" fill="url(#hv)" />
<polygon points="865,245 875,242.5 887.5,247.5 897.5,245 907.5,253.8 935,266.2 925,272.5 920,278.8 915,272.5 900,266.2 898.8,257.5 887.5,252.5 875,248.8" fill="#42a046" />
<polygon points="865,245 875,242.5 887.5,247.5 897.5,245 907.5,253.8 935,266.2 925,272.5 920,278.8 915,272.5 900,266.2 898.8,257.5 887.5,252.5 875,248.8" fill="url(#gd)" />
<polygon points="736.2,200 743.8,200 836.2,292.5 832.5,296.2" fill="#42a046" />
<polygon points="736.2,200 743.8,200 836.2,292.5 832.5,296.2" fill="url(#gd)" />
<polygon points="715,170 722.5,168.8 785,212.5 775,215" fill="#42a046" />
<polygon points="715,170 722.5,168.8 785,212.5 775,215" fill="url(#gd)" />
<polygon points="720,180 735,190 755,212.5 745,215 732.5,200 716.2,183.8" fill="#42a046" />
<polygon points="720,180 735,190 755,212.5 745,215 732.5,200 716.2,183.8" fill="url(#gd)" />
<polygon points="585,78.8 620,65 642.5,55 660,42.5 690,37.5 735,37.5 757.5,45 765,62.5 772.5,71.2 760,73.8 760,77.5 762.5,86.2 745,83.8 750,93.8 743.8,100 732.5,102.5 740,107.5 730,111.2 735,120 723.8,127.5 732.5,140 737.5,153.8 730,163.8 720,155 710,147.5 696.2,137.5 692.5,132.5 697.5,125 685,121.2 680,117.5 660,117.5 642.5,125 637.5,115 622.5,115 620,93.8 605,93.8 600,90 586.2,91.2" fill="#42a046" />
<polygon points="585,78.8 610,69.5 613.8,80 605,87.5 600,90 586.2,91.2" fill="url(#gd)" />
<polygon points="710,61.2 720,53.8 740,60 757.5,61.2 760,65 753.8,70 735,66.2 722.5,65 725,72.5 731.2,77.5 727.5,85 715,88.8 695,90 691.2,97.5 691.2,117.5 680,117.5 678.8,97.5 682.5,87.5 692.5,81.2 710,80 717.5,75 710,67.5" fill="#6fe0ee" />
<polygon points="624.8,117 637.5,113.8 639.1,128.1 629.5,131.3 624.8,121.8" fill="#efc46e" />
<polygon points="620,142.4 637.5,137.7 634.3,148.8 620,153.6" fill="#42a046" />
<polygon points="656.5,126.5 683.6,125 680.4,136.1 675.6,148.8 672.4,159.9 667.7,169.4 659.7,164.7 658.1,153.6 651.8,150.4 648.6,137.7 651.8,129.7" fill="#42a046" />
<polygon points="656.5,126.5 683.6,125 680.4,136.1 675.6,148.8 672.4,159.9 667.7,169.4 659.7,164.7 658.1,153.6 651.8,150.4 648.6,137.7 651.8,129.7" fill="url(#gd)" />
<polygon points="656.5,128.1 667.7,125 669.3,131.3 664.5,137.7 662.9,147.2 658.1,145.6 655.7,136.1" fill="#2c2628" />
<polygon points="672.4,126.5 682,125.7 678.8,137.7 674,147.2 672.4,137.7" fill="#5a3a30" />
<polygon points="642.2,134.5 648.6,134.5 650.2,142.4 643.8,142.4" fill="#e8284a" />
<polygon points="640.7,155.1 643.8,156.7 643.8,166.3 635.9,163.1" fill="#e8284a" />
<polygon points="650.2,171 659.7,167.9 664.5,172.6 658.1,176.6 651,175.8" fill="#e8284a" />
<polygon points="643.8,142.4 650.2,142.4 651,148 644.6,148" fill="#2c2628" />
<polygon points="647,161.5 656.5,160.7 658.9,167.9 650.2,170.2" fill="#42a046" />
<polygon points="647,161.5 656.5,160.7 658.9,167.9 650.2,170.2" fill="url(#gd)" />
<polygon points="640.7,124.2 647,117.8 651,124.2" fill="#2c2628" />
<polygon points="678.8,126.5 693.1,128.1 694.7,137.7 709,147.2 718.5,164.7 716.9,172.6 731.2,193.3 731.2,202 718.5,199.6 693.1,196.5 683.6,191.7 678.8,179 674,159.9 675.6,148.8" fill="#f3f2f3" />
<polyline points="674,159.9 677.2,179 683.6,191.7 693.1,196.5" fill="none" stroke="#42a046" stroke-width="2.5" stroke-linejoin="round" stroke-linecap="round" />
<polygon points="708.2,150.4 712.9,148.8 714.5,153.6 711.4,155.9" fill="#42a046" />
<polygon points="617.1,200 627,194 646.9,206 642.9,219.9 642.9,265.5 633,271.5 642.9,283.4 629,287.4 625.1,289.4 625.1,303.3 629,319.2 633,340 631,335.9 617.1,341.8 607.2,351.8 601.2,367.7 593.3,373.6 583.3,371.6 575.4,379.6 569.4,385.5 563.5,381.6 561.5,373.6 569.4,359.7 577.4,339.9 585.3,329.9 569.4,340 577.4,331.1 593.3,313.2 589.3,313.2 577.4,303.3 587.3,295.3 583.3,283.4 589.3,277.5 597.2,267.5 603.2,255.6 601.2,245.7 605.2,229.8 609.2,211.9" fill="#6fe0ee" />
<polygon points="557.5,279.4 569.4,279.4 569.4,299.3 555.5,303.3" fill="#6fe0ee" />
<polygon points="529.7,323.1 549.6,317.2 555.5,327.1 539.7,339 527.7,338" fill="#6fe0ee" />
<polygon points="370,285 376.7,275 396.7,273 400,258 413,250 426.7,253 430,265 440,268 440,281.7 445,290 433,298 416.7,306.7 410,298 393,295 381.7,300 378,291.7" fill="#f3f2f3" />
<polygon points="470,362 478,357 490,357 505,365 507,372 500,385 497,392 490,385 475,377 462,370 458,365" fill="#f3f2f3" />
<polygon points="366,409 400,407 410,403 422,410 407,430 370,422" fill="#f3f2f3" />
<polygon points="569.4,255.6 595.3,245.7 601.2,249.7 597.2,265.5 585.3,279.4 583.3,287.4 589.3,297.3 577.4,299.3 569.4,291.4 561.5,277.5 563.5,265.5" fill="#f3f2f3" />
<polygon points="533.7,309.2 547.6,297.3 555.5,301.3 557.5,311.2 549.6,319.2 539.7,317.2" fill="#f3f2f3" />
<polygon points="527.7,323.1 537.7,319.2 539.7,327.1 529.7,337 523.8,340" fill="#f3f2f3" />
<polygon points="573.4,331.1 591.3,312.2 594.3,314.2 583.3,329.1 569.4,340 549.6,340 555.5,337" fill="#f3f2f3" />
<polygon points="519.8,347.8 527.7,333.9 541.6,337.9 565.5,331.9 581.4,329.9 577.4,339.9 569.4,359.7 559.5,355.7 549.6,371.6 539.7,371.6 537.7,359.7 525.7,351.8" fill="#f3f2f3" />
<polygon points="710,385 730,382.5 740,397.5 752.5,410 742.5,427.5 725,431.2 700,425 692.5,420 700,410 700,395" fill="#f3f2f3" />
<polygon points="672.5,457.5 685,447.5 687.5,462.5 695,465 700,485 700,502.5 677.5,507.5" fill="#f3f2f3" />
<polygon points="822.5,340 840,332.5 862.5,336.2 870,350 865,365 850,370 832.5,362.5" fill="#f3f2f3" />
<polygon points="423,657 445,651 462,658 467,672 461,684 433,684" fill="#f3f2f3" />
<polygon points="468,535 478,528 498,533 504,545 490,552 474,548" fill="#f3f2f3" />
<polygon points="603.2,355.7 617.1,343.8 633,345.8 642.9,359.7 646.9,385.5 654.8,415.3 664.8,439.2 670.7,460 668.7,459.9 670.7,465.8 648.9,469.8 640.9,477.7 629,481.7 621.1,475.7 609.2,467.8 613.1,459.9 609.2,460 613.1,439.2 617.1,419.3 609.2,407.4 597.2,395.5 591.3,387.5 597.2,377.6" fill="#f3f2f4" stroke="#fff" stroke-width="2.5" stroke-linejoin="round"/>
<polygon points="629,287.4 642.9,291.4 643.9,340 634,340 629,319.2 625.1,303.3 625.1,291.4" fill="#f3f2f4" stroke="#fff" stroke-width="2.5" stroke-linejoin="round"/>
<polygon points="611.2,407.4 621.1,407.4 621.1,431.2 625.1,447.1 629,460 611.2,460 614.1,439.2 617.1,419.3" fill="#42a046" />
<polygon points="611.2,407.4 621.1,407.4 621.1,431.2 625.1,447.1 629,460 611.2,460 614.1,439.2 617.1,419.3" fill="url(#gd)" />
<polygon points="613.1,444 621.1,442 625.1,459.9 635,463.8 629,467.8 613.1,461.8" fill="#42a046" />
<polygon points="613.1,444 621.1,442 625.1,459.9 635,463.8 629,467.8 613.1,461.8" fill="url(#gd)" />
<polygon points="644.9,459.9 666.8,458.9 664.8,463.8 648.9,466.8" fill="#42a046" />
<polygon points="644.9,459.9 666.8,458.9 664.8,463.8 648.9,466.8" fill="url(#gd)" />
<polygon points="597.2,379.6 603.2,377.6 609.2,385.5 617.1,387.5 609.2,395.5 601.2,393.5" fill="#42a046" />
<polygon points="597.2,379.6 603.2,377.6 609.2,385.5 617.1,387.5 609.2,395.5 601.2,393.5" fill="url(#gd)" />
<polygon points="621.1,345.8 633,344.8 637,353.8 629,353.8" fill="#42a046" />
<polygon points="621.1,345.8 633,344.8 637,353.8 629,353.8" fill="url(#gd)" />
<polygon points="609.2,353.8 629,349.8 642.9,371.6 648.9,395.5 633,405.4 619.1,407.4 611.2,395.5 617.1,385.5 611.2,379.6 603.2,381.6" fill="#f3f2f4" stroke="#fff" stroke-width="2"/>
<polygon points="621.1,413.3 650.9,407.4 658.8,431.2 664.8,455.1 629,457 621.1,431.2" fill="#f3f2f4" stroke="#fff" stroke-width="2"/>
<polygon points="569.4,301.3 573.4,311.2 587.3,311.2 579.4,321.2 573.4,331.1 563.5,333.1 539.7,339 549.6,327.1 557.5,317.2 563.5,307.2" fill="#2c2628" />
<polygon points="589.3,395.5 607.2,407.4 587.3,439.2 573.4,447.1 565.5,460 543.6,460 557.5,443.1 569.4,427.2 579.4,413.3" fill="#2c2628" />
<polygon points="535.7,359.7 538.7,367.7 529.7,383.6 525.7,389.5 515.8,385.5 529.7,379.6" fill="#2c2628" />
<polygon points="502.9,405.4 507.9,402.4 511.8,409.4 507.9,413.3" fill="#2c2628" />
<polygon points="557.5,439 583.3,439 577.4,447.9 565.5,451.9 559.5,469.8 553.6,481.7 547.6,485.7 545.6,479.7 537.7,487.7 535.7,497.6 529.7,497.6 533.7,485.7 523.8,485.7 525.7,479.7 539.7,473.8 551.6,465.8 539.7,465.8 547.6,451.9" fill="#2c2628" />
<polygon points="501.9,617.6 519.8,615.2 529.7,602.7 547.6,599.7 549.6,602.7 531.7,605.7 521.8,617.6 515.8,619.6 501.9,619.6" fill="#2c2628" />
<polygon points="573.4,594.8 586.3,594.8 588.3,615.6 594.3,615.6 594.3,619.6 585.3,618.6 577.4,605.7" fill="#2c2628" />
<polygon points="573.4,681.2 589.3,681.2 585.3,700 575.4,700" fill="#2c2628" />
<polygon points="646.9,239.7 664.8,237.7 666.8,229.8 674.7,226.8 680.7,229.8 682.7,235.7 700.5,239.7 716.4,244.7 714.4,254.6 700.5,258.6 676.7,257.6 662.8,257.6 648.9,263.6 646.9,259.6" fill="#3399f5" />
<polygon points="418.8,111.2 430,112.5 425,125 421.2,136.2 411.2,136.2" fill="#3399f5" />
<polygon points="501.9,427.2 511.8,429.2 519.8,439.2 543.6,443.1 555.5,439.2 545.6,451.1 529.7,455.1 501.9,453.1" fill="#3399f5" />
<polygon points="501.9,439 555.5,439 547.6,451.9 539.7,455.9 525.7,453.9 501.9,451.9" fill="#3399f5" />
<polygon points="565.5,451.9 577.4,447.9 587.3,440 585.3,455.9 573.4,471.8 569.4,489.7 557.5,491.6 553.6,509.5 549.6,517.5 529.7,517.5 531.7,509.5 537.7,497.6 539.7,487.7 547.6,485.7 553.6,481.7 559.5,469.8" fill="#3399f5" />
<polygon points="565.5,460 569.4,449.1 575.4,447.1 587.3,439.2 587.3,460" fill="#3399f5" />
<polygon points="843.8,391.2 852.5,392.5 871.2,410 862.5,425 850,431.2 835,435 818.8,440 821.2,431.2 835,426.2 852.5,415 846.2,395" fill="#3399f5" />
<polygon points="861.2,371.2 875,360 885,360 890,370 880,375 875,385 865,387.5 860,380" fill="#3399f5" />
<polygon points="861.2,370 871.2,350 877.5,356.2 887.5,362.5 890,376 875,376" fill="#3399f5" />
<polygon points="557.5,491.6 567.5,489.7 565.5,503.6 557.5,519.4 549.6,517.5 553.6,509.5" fill="#f3f2f3" />
<polygon points="411.2,136.2 421.2,136.2 420,138.8 411.8,138" fill="#9fd0f5" />
<polygon points="646.9,307.2 650.9,305.3 654.8,315.2 658.8,323.1 652.9,331.1 646.9,335.1" fill="#d47fb0" />
<polygon points="647.5,372.5 665,370 672.5,387.5 680,410 687.5,435 691.2,460 687.5,462.5 685,447.5 675,452.5 672.5,457.5 662.5,435 652.5,402.5" fill="#d47fb0" />
<polygon points="597.2,491.6 605.2,486.7 613.1,493.6 629,507.5 640.9,519.4 648.9,531.4 656.8,537.3 668.7,543.3 674.7,557.2 676.7,563.1 668.7,559.2 644.9,547.2 625.1,537.3 609.2,531.4 605.2,527.4 595.3,519.4 599.2,509.5" fill="#d47fb0" />
<polygon points="700,530 712.5,532.5 717.5,545 725,557.5 732.5,562.5 735,572.5 720,570 710,565 702.5,552.5 697.5,540" fill="#d47fb0" />
<polygon points="680,606.2 700,603.8 702.5,608.8 682.5,610" fill="#d47fb0" />
<polygon points="677.5,507.5 700,502.5 717.5,507.5 721.2,515 717.5,525 710,536 700,530 697.5,540 702.5,552.5 702.5,582.5 695,575 685,570 681.2,545" fill="#bf7fdc" />
<polygon points="725,612.5 737.5,612.5 738,621.2 725,620" fill="#bf7fdc" />
<polygon points="662.8,639.4 674.7,619.6 680.7,617.6 688.6,625.5 676.7,639.4 680.7,655.3 668.7,663.3 656.8,671.2 656.8,659.3" fill="#bf7fdc" />
<polygon points="845,446.2 812.5,460 807.5,470 812.5,472.5 800,485 790,495 787.5,507.5 800,513.8 820,480" fill="#42a046" />
<polygon points="747.5,506.2 760,503.8 775,502.5 787.5,507.5 790,525 785,536 785,532.5 775,550 760,570 752.5,587.5 742.5,588.8 737.5,575 740,557.5 732.5,540 735,527.5 735,525 755,515 750,508.8" fill="#42a046" />
<polygon points="674.7,611.6 690,611.6 685,612.5 700,630 695,645 685,660 700,670 712.5,675 707.5,690 705,705 658.8,707 656.8,673.2 668.7,665.3 680.7,655.3 676.7,639.4 688.6,625.5 680.7,617.6" fill="#42a046" />
<polygon points="549.6,369.7 559.5,355.7 569.4,356.7 563.5,369.7 555.5,379.6" fill="#42a046" />
<polygon points="593.3,244.7 601.2,242.7 604.2,249.7 600.2,263.6 589.3,279.4 583.3,285.4 589.3,295.3 575.4,302.3 572.4,299.3 585.3,293.3 581.4,283.4 587.3,275.5 595.3,265.5 598.2,253.6" fill="#42a046" />
<polygon points="501.9,451.9 515.8,454.9 533.7,459.9 537.7,465.8 529.7,469.8 515.8,465.8 501.9,459.9" fill="#8bc63c" />
<polygon points="492,513.5 501.9,514.5 511.8,517.5 515.8,515.5 513.8,521.4 501.9,521.4 492,518.5" fill="#8bc63c" />
<polygon points="460,522.5 475,520 485,520 480,530 472.5,535 462.5,527.5" fill="#8bc63c" />
<polygon points="500,535 507.5,532.5 510,542.5 502.5,540" fill="#8bc63c" />
<polygon points="609.2,532.4 644.9,548.2 678.7,567.1 676.7,569.1 644.9,551.2 609.2,535.3" fill="#8bc63c" />
<polygon points="490,673.2 505.9,667.2 511.8,681.2 497.9,687.1" fill="#8bc63c" />
<polygon points="460,677.5 505,667.5 512.5,680 497.5,682.5 475,682.5" fill="#8bc63c" />
<polygon points="867.5,396.2 877.5,391.2 881.2,395 872.5,401.2" fill="#8bc63c" />
<polyline points="590.119,371.521 558.319,406.321" fill="none" stroke="#1c1c1c" stroke-width="1.5" stroke-linejoin="round" stroke-linecap="round" />
<polyline points="592.481,373.679 560.681,408.479" fill="none" stroke="#1c1c1c" stroke-width="1.5" stroke-linejoin="round" stroke-linecap="round" />
<polyline points="582.095,370.547 554.295,402.347" fill="none" stroke="#1c1c1c" stroke-width="1.5" stroke-linejoin="round" stroke-linecap="round" />
<polyline points="584.505,372.653 556.705,404.453" fill="none" stroke="#1c1c1c" stroke-width="1.5" stroke-linejoin="round" stroke-linecap="round" />
<polyline points="607.958,422.291 578.158,458.991" fill="none" stroke="#1c1c1c" stroke-width="1.5" stroke-linejoin="round" stroke-linecap="round" />
<polyline points="610.442,424.309 580.642,461.009" fill="none" stroke="#1c1c1c" stroke-width="1.5" stroke-linejoin="round" stroke-linecap="round" />
<polyline points="542.368,430.179 522.568,454.079" fill="none" stroke="#1c1c1c" stroke-width="1.5" stroke-linejoin="round" stroke-linecap="round" />
<polyline points="544.832,432.221 525.032,456.121" fill="none" stroke="#1c1c1c" stroke-width="1.5" stroke-linejoin="round" stroke-linecap="round" />
<polyline points="599.809,439.209 534.309,554.409" fill="none" stroke="#1c1c1c" stroke-width="1.5" stroke-linejoin="round" stroke-linecap="round" />
<polyline points="602.591,440.791 537.091,555.991" fill="none" stroke="#1c1c1c" stroke-width="1.5" stroke-linejoin="round" stroke-linecap="round" />
<polyline points="605.771,465.079 548.171,579.279" fill="none" stroke="#1c1c1c" stroke-width="1.5" stroke-linejoin="round" stroke-linecap="round" />
<polyline points="608.629,466.521 551.029,580.721" fill="none" stroke="#1c1c1c" stroke-width="1.5" stroke-linejoin="round" stroke-linecap="round" />
<polyline points="536.573,438.864 524.573,450.764" fill="none" stroke="#1c1c1c" stroke-width="1.5" stroke-linejoin="round" stroke-linecap="round" />
<polyline points="538.827,441.136 526.827,453.036" fill="none" stroke="#1c1c1c" stroke-width="1.5" stroke-linejoin="round" stroke-linecap="round" />
<polyline points="568.269,558.869 542.469,584.669" fill="none" stroke="#1c1c1c" stroke-width="1.5" stroke-linejoin="round" stroke-linecap="round" />
<polyline points="570.531,561.131 544.731,586.931" fill="none" stroke="#1c1c1c" stroke-width="1.5" stroke-linejoin="round" stroke-linecap="round" />
<polyline points="576.102,580.865 550.302,616.665" fill="none" stroke="#1c1c1c" stroke-width="1.5" stroke-linejoin="round" stroke-linecap="round" />
<polyline points="578.698,582.735 552.898,618.535" fill="none" stroke="#1c1c1c" stroke-width="1.5" stroke-linejoin="round" stroke-linecap="round" />
<polyline points="582.014,614.648 542.314,668.248" fill="none" stroke="#1c1c1c" stroke-width="1.5" stroke-linejoin="round" stroke-linecap="round" />
<polyline points="584.586,616.552 544.886,670.152" fill="none" stroke="#1c1c1c" stroke-width="1.5" stroke-linejoin="round" stroke-linecap="round" />
<polyline points="578.139,658.315 546.339,699.015" fill="none" stroke="#1c1c1c" stroke-width="1.5" stroke-linejoin="round" stroke-linecap="round" />
<polyline points="580.661,660.285 548.861,700.985" fill="none" stroke="#1c1c1c" stroke-width="1.5" stroke-linejoin="round" stroke-linecap="round" />
<polyline points="531.407,602.757 515.507,624.557" fill="none" stroke="#1c1c1c" stroke-width="1.5" stroke-linejoin="round" stroke-linecap="round" />
<polyline points="533.993,604.643 518.093,626.443" fill="none" stroke="#1c1c1c" stroke-width="1.5" stroke-linejoin="round" stroke-linecap="round" />
<polyline points="609.905,490.66 596.905,508.56" fill="none" stroke="#1c1c1c" stroke-width="1.6" stroke-linejoin="round" stroke-linecap="round" />
<polyline points="612.495,492.54 599.495,510.44" fill="none" stroke="#1c1c1c" stroke-width="1.6" stroke-linejoin="round" stroke-linecap="round" />
<polyline points="653.504,536.361 645.604,547.261" fill="none" stroke="#1c1c1c" stroke-width="1.6" stroke-linejoin="round" stroke-linecap="round" />
<polyline points="656.096,538.239 648.196,549.139" fill="none" stroke="#1c1c1c" stroke-width="1.6" stroke-linejoin="round" stroke-linecap="round" />
<polyline points="657.505,540.24 673.405,562.14" fill="none" stroke="#1c1c1c" stroke-width="1.6" stroke-linejoin="round" stroke-linecap="round" />
<polyline points="660.095,538.36 675.995,560.26" fill="none" stroke="#1c1c1c" stroke-width="1.6" stroke-linejoin="round" stroke-linecap="round" />
<polyline points="676.285,408.959 661.285,426.459" fill="none" stroke="#1c1c1c" stroke-width="1.6" stroke-linejoin="round" stroke-linecap="round" />
<polyline points="678.715,411.041 663.715,428.541" fill="none" stroke="#1c1c1c" stroke-width="1.6" stroke-linejoin="round" stroke-linecap="round" />
<polyline points="686.5,488.751 674,498.751" fill="none" stroke="#1c1c1c" stroke-width="1.6" stroke-linejoin="round" stroke-linecap="round" />
<polyline points="688.5,491.249 676,501.249" fill="none" stroke="#1c1c1c" stroke-width="1.6" stroke-linejoin="round" stroke-linecap="round" />
<polyline points="681.296,523.554 698.796,543.554" fill="none" stroke="#1c1c1c" stroke-width="1.2" stroke-linejoin="round" stroke-linecap="round" />
<polyline points="683.704,521.446 701.204,541.446" fill="none" stroke="#1c1c1c" stroke-width="1.2" stroke-linejoin="round" stroke-linecap="round" />
<polyline points="688.771,548.524 701.271,563.524" fill="none" stroke="#1c1c1c" stroke-width="1.2" stroke-linejoin="round" stroke-linecap="round" />
<polyline points="691.229,546.476 703.729,561.476" fill="none" stroke="#1c1c1c" stroke-width="1.2" stroke-linejoin="round" stroke-linecap="round" />
<polyline points="718.72,554.04 711.22,564.04" fill="none" stroke="#1c1c1c" stroke-width="1.8" stroke-linejoin="round" stroke-linecap="round" />
<polyline points="721.28,555.96 713.78,565.96" fill="none" stroke="#1c1c1c" stroke-width="1.8" stroke-linejoin="round" stroke-linecap="round" />
<polyline points="529.7,387.5 549.6,385.5 559.5,391.5 563.5,401.4 573.4,409.4 569.4,417.3 557.5,425.3 549.6,431.2 529.7,427.2 519.8,423.3 511.8,413.3 515.8,407.4 539.7,413.3 555.5,409.4 549.6,399.4 537.7,395.5" fill="none" stroke="#e8735e" stroke-width="0.8" stroke-linejoin="round" stroke-linecap="round" />
<polyline points="499.9,461.8 505.9,459.9 525.7,479.7 539.7,483.7 529.7,497.6 549.6,521.4 545.6,525.4 533.7,523.4 517.8,523.4 519.8,533.3 533.7,551.2 545.6,559.2 549.6,575.1" fill="none" stroke="#e8735e" stroke-width="0.8" stroke-linejoin="round" stroke-linecap="round" />
<polyline points="609.2,469.8 617.1,477.7 629,489.7 640.9,491.6 658.8,493.6 659.8,497.6 644.9,501.6 633,511.5" fill="none" stroke="#e8735e" stroke-width="0.8" stroke-linejoin="round" stroke-linecap="round" />
<polyline points="605.2,527.4 603.2,535.3 589.3,545.3 583.3,559.2 581.4,571.1 577.4,580" fill="none" stroke="#e8735e" stroke-width="0.8" stroke-linejoin="round" stroke-linecap="round" />
<polyline points="581.4,560 579.4,571.9 575.4,583.8 573.4,593.8 581.4,609.7 587.3,619.6 597.2,627.5 599.2,639.4 607.2,647.4 603.2,655.3 593.3,657.3 593.3,675.2 589.3,683.1" fill="none" stroke="#e8735e" stroke-width="0.8" stroke-linejoin="round" stroke-linecap="round" />
<polyline points="547.6,560 549.6,571.9 545.6,581.8 529.7,575.9 515.8,581.8 517.8,587.8 529.7,589.8 547.6,589.8 547.6,593.8 551.6,599.7" fill="none" stroke="#e8735e" stroke-width="0.8" stroke-linejoin="round" stroke-linecap="round" />
<polyline points="501.9,619.6 513.8,655.3 529.7,643.4 533.7,617.6 549.6,609.7 551.6,615.6 555.5,625.5 553.6,639.4 545.6,655.3 542.6,671.2 543.6,683.1" fill="none" stroke="#e8735e" stroke-width="0.8" stroke-linejoin="round" stroke-linecap="round" />
<polyline points="435,113.75 447.5,115 455,132.5 475,152.5 490,165 500,157.5" fill="none" stroke="#fff" stroke-width="1.7" stroke-linejoin="round" stroke-linecap="round" opacity="0.85"/>
<polyline points="420,137.5 430,157.5 432.5,185 437.5,202.5 435,216" fill="none" stroke="#fff" stroke-width="1.7" stroke-linejoin="round" stroke-linecap="round" opacity="0.85"/>
<polyline points="397.5,182.5 420,185 450,190 475,192.5 480,180 490,165" fill="none" stroke="#fff" stroke-width="1.7" stroke-linejoin="round" stroke-linecap="round" opacity="0.85"/>
<polyline points="447.5,115 435,127.5 422.5,135" fill="none" stroke="#fff" stroke-width="1.7" stroke-linejoin="round" stroke-linecap="round" opacity="0.85"/>
<polyline points="475,192.5 472.5,205 475,216" fill="none" stroke="#fff" stroke-width="1.7" stroke-linejoin="round" stroke-linecap="round" opacity="0.85"/>
<polyline points="437.5,275 460,272.5 490,267.5 510,257.5 525,247.5 550,235 560,225 575,215 600,207.5" fill="none" stroke="#fff" stroke-width="1.7" stroke-linejoin="round" stroke-linecap="round" opacity="0.85"/>
<polyline points="460,312.5 485,315 525,313.75" fill="none" stroke="#fff" stroke-width="1.7" stroke-linejoin="round" stroke-linecap="round" opacity="0.85"/>
<polyline points="510,257.5 505,275 495,300 490,315 475,335 465,345 462.5,360" fill="none" stroke="#fff" stroke-width="1.7" stroke-linejoin="round" stroke-linecap="round" opacity="0.85"/>
<polyline points="430,225 432.5,250 450,265 460,272.5" fill="none" stroke="#fff" stroke-width="1.7" stroke-linejoin="round" stroke-linecap="round" opacity="0.85"/>
<polyline points="560,225 550,245 555,270" fill="none" stroke="#fff" stroke-width="1.7" stroke-linejoin="round" stroke-linecap="round" opacity="0.85"/>
<polyline points="330,385 362.5,387.5 375,400 400,405 410,406 435,413.75 462.5,413.75 497.5,420" fill="none" stroke="#fff" stroke-width="1.7" stroke-linejoin="round" stroke-linecap="round" opacity="0.85"/>
<polyline points="410,406 412.5,375 420,360 428,330 440,300" fill="none" stroke="#fff" stroke-width="1.7" stroke-linejoin="round" stroke-linecap="round" opacity="0.85"/>
<polyline points="462.5,413.75 465,392.5 460,375 455,360" fill="none" stroke="#fff" stroke-width="1.7" stroke-linejoin="round" stroke-linecap="round" opacity="0.85"/>
<polyline points="650,215 660,227.5 675,237.5 680,257.5 682.5,275 680,295 665,296 647.5,295" fill="none" stroke="#fff" stroke-width="1.7" stroke-linejoin="round" stroke-linecap="round" opacity="0.85"/>
<polyline points="660,212.5 682.5,217.5 717.5,215 735,225 750,250 780,260 807.5,267.5 830,267.5" fill="none" stroke="#fff" stroke-width="1.7" stroke-linejoin="round" stroke-linecap="round" opacity="0.85"/>
<polyline points="780,260 765,275 740,282.5 720,272.5 710,275 687.5,295" fill="none" stroke="#fff" stroke-width="1.7" stroke-linejoin="round" stroke-linecap="round" opacity="0.85"/>
<polyline points="682.5,275 710,275" fill="none" stroke="#fff" stroke-width="1.7" stroke-linejoin="round" stroke-linecap="round" opacity="0.85"/>
<polyline points="820,200 822.5,232.5 830,267.5" fill="none" stroke="#fff" stroke-width="1.7" stroke-linejoin="round" stroke-linecap="round" opacity="0.85"/>
<polyline points="540,210 548,225 560,225" fill="none" stroke="#fff" stroke-width="1.7" stroke-linejoin="round" stroke-linecap="round" opacity="0.85"/>
<polyline points="672,387 690,392 700,395" fill="none" stroke="#fff" stroke-width="1.7" stroke-linejoin="round" stroke-linecap="round" opacity="0.85"/>
<polyline points="650,400 672,405 700,410" fill="none" stroke="#fff" stroke-width="1.7" stroke-linejoin="round" stroke-linecap="round" opacity="0.85"/>
<polyline points="350,470 375,465 412,457 450,460 475,452 497,460" fill="none" stroke="#bfe6e0" stroke-width="1.1" stroke-linejoin="round" stroke-linecap="round" />
<polyline points="500,560 530,565 560,575 600,590 640,600 675,605" fill="none" stroke="#bfe6e0" stroke-width="1.1" stroke-linejoin="round" stroke-linecap="round" />
<polyline points="600,470 640,490 672,500" fill="none" stroke="#bfe6e0" stroke-width="1.1" stroke-linejoin="round" stroke-linecap="round" />
<polyline points="700,420 740,430 770,440 800,470" fill="none" stroke="#bfe6e0" stroke-width="1.1" stroke-linejoin="round" stroke-linecap="round" />
<polyline points="347,419 400,468 460,522 510,565 550,598 600,612 675,607" fill="none" stroke="#b9c9a6" stroke-width="1" stroke-linejoin="round" stroke-linecap="round" />
<polyline points="785,270 787,350 788,420 790,495" fill="none" stroke="#b9c9a6" stroke-width="1" stroke-linejoin="round" stroke-linecap="round" />
<polyline points="610,570 650,600 675,640" fill="none" stroke="#b9c9a6" stroke-width="1" stroke-linejoin="round" stroke-linecap="round" />
<polyline points="835,295 860,318 885,342 912,370" fill="none" stroke="#cfcfd0" stroke-width="1" stroke-linejoin="round" stroke-linecap="round" />
<polyline points="661,0 654,12 640,28 629,44 623,60 623,90 626,117 639,133 645,150 650,169 652,202 646,215" fill="none" stroke="#f0c468" stroke-width="3" stroke-linejoin="round" stroke-linecap="round" />
<polyline points="641,150 628,169 620,192 615,200 601,230 585,246 565,260 550,279 534,307 524,327 512,360 507,376 500,385 499,422 500,460 497,495 490,520 485,520 470,545 460,585 450,620 445,650 450,675 452,705" fill="none" stroke="#f0c468" stroke-width="3" stroke-linejoin="round" stroke-linecap="round" />
<polyline points="645,215 643,265 643,320 645,380 655,415 665,440 672,460 676,500 680,557 682,580 681,600 673,608 663,625 655,650 653,667 657,683 662,705" fill="none" stroke="#f0c468" stroke-width="3" stroke-linejoin="round" stroke-linecap="round" />
<polyline points="675,607 700,612 720,620 745,622 775,615 817,607 832,615 910,614 950,593 1010,570 1050,547 1073,540 1100,550 1133,570 1183,603 1217,623 1267,650 1300,683 1320,705" fill="none" stroke="#f0c468" stroke-width="4.4" stroke-linejoin="round" stroke-linecap="round" />
<polyline points="896,0 893,25 880,50 868,72 855,92 847,110 845,128 838,138 826,142 812,137 800,128 788,118 775,114 763,114 731,120 699,125 683,123 656,122 637,131 625,148 613,163 597,187 575,207 550,219 527,222 500,221 475,220 450,217 412,220 375,227 350,232 325,250 310,258 292,261 278,258 268,251 258,247" fill="none" stroke="#f0955a" stroke-width="5.4" stroke-linejoin="round" stroke-linecap="round" />
<polyline points="896,0 893,25 880,50 868,72 855,92 847,110 845,128 838,138 826,142 812,137 800,128 788,118 775,114 763,114 731,120 699,125 683,123 656,122 637,131 625,148 613,163 597,187 575,207 550,219 527,222 500,221 475,220 450,217 412,220 375,227 350,232 325,250 310,258 292,261 278,258 268,251 258,247" fill="none" stroke="#fbe0c8" stroke-width="2.2" stroke-linejoin="round" stroke-linecap="round" />
<polyline points="470,223 472,250 470,287 460,312 445,340 438,362 438,410 440,435 437,485 435,520 436,545 450,585 467,620 472,645 474,682 474,705" fill="none" stroke="#f0955a" stroke-width="4.6" stroke-linejoin="round" stroke-linecap="round" />
<polyline points="470,223 472,250 470,287 460,312 445,340 438,362 438,410 440,435 437,485 435,520 436,545 450,585 467,620 472,645 474,682 474,705" fill="none" stroke="#fbe0c8" stroke-width="1.3999999999999995" stroke-linejoin="round" stroke-linecap="round" />
<polyline points="452,218 462,228 470,240" fill="none" stroke="#f0955a" stroke-width="3" stroke-linejoin="round" stroke-linecap="round" />
<polyline points="452,218 462,228 470,240" fill="none" stroke="#fbe0c8" stroke-width="-0.20000000000000018" stroke-linejoin="round" stroke-linecap="round" />
<polyline points="490,221 478,228 471,240" fill="none" stroke="#f0955a" stroke-width="3" stroke-linejoin="round" stroke-linecap="round" />
<polyline points="490,221 478,228 471,240" fill="none" stroke="#fbe0c8" stroke-width="-0.20000000000000018" stroke-linejoin="round" stroke-linecap="round" />
<rect x="657" y="116.500" width="27" height="9" rx="3" fill="#c8202c"/><text x="670.500" y="124" font-size="8.500" font-weight="bold" fill="#fff" text-anchor="middle">U20</text>
<rect x="630" y="364.500" width="19" height="10" rx="1" fill="#2e9e48"/><rect x="649" y="365" width="6" height="9" fill="#8a6a3a"/>
<text transform="translate(129.8,80) scale(1,1.2826) rotate(-45)" font-size="43.3" fill="#fff" fill-opacity="0.9">e-plan.gov.tr</text>
<text transform="translate(383.2,80) scale(1,1.2826) rotate(-45)" font-size="43.3" fill="#fff" fill-opacity="0.9">e-plan.gov.tr</text>
<text transform="translate(636.6,80) scale(1,1.2826) rotate(-45)" font-size="43.3" fill="#fff" fill-opacity="0.9">e-plan.gov.tr</text>
<text transform="translate(890,80) scale(1,1.2826) rotate(-45)" font-size="43.3" fill="#fff" fill-opacity="0.9">e-plan.gov.tr</text>
<text transform="translate(1143.4,80) scale(1,1.2826) rotate(-45)" font-size="43.3" fill="#fff" fill-opacity="0.9">e-plan.gov.tr</text>
<text transform="translate(1396.8,80) scale(1,1.2826) rotate(-45)" font-size="43.3" fill="#fff" fill-opacity="0.9">e-plan.gov.tr</text>
<text transform="translate(129.8,405) scale(1,1.2826) rotate(-45)" font-size="43.3" fill="#fff" fill-opacity="0.9">e-plan.gov.tr</text>
<text transform="translate(383.2,405) scale(1,1.2826) rotate(-45)" font-size="43.3" fill="#fff" fill-opacity="0.9">e-plan.gov.tr</text>
<text transform="translate(636.6,405) scale(1,1.2826) rotate(-45)" font-size="43.3" fill="#fff" fill-opacity="0.9">e-plan.gov.tr</text>
<text transform="translate(890,405) scale(1,1.2826) rotate(-45)" font-size="43.3" fill="#fff" fill-opacity="0.9">e-plan.gov.tr</text>
<text transform="translate(1143.4,405) scale(1,1.2826) rotate(-45)" font-size="43.3" fill="#fff" fill-opacity="0.9">e-plan.gov.tr</text>
<text transform="translate(1396.8,405) scale(1,1.2826) rotate(-45)" font-size="43.3" fill="#fff" fill-opacity="0.9">e-plan.gov.tr</text>
<text transform="translate(129.8,730) scale(1,1.2826) rotate(-45)" font-size="43.3" fill="#fff" fill-opacity="0.9">e-plan.gov.tr</text>
<text transform="translate(383.2,730) scale(1,1.2826) rotate(-45)" font-size="43.3" fill="#fff" fill-opacity="0.9">e-plan.gov.tr</text>
<text transform="translate(636.6,730) scale(1,1.2826) rotate(-45)" font-size="43.3" fill="#fff" fill-opacity="0.9">e-plan.gov.tr</text>
<text transform="translate(890,730) scale(1,1.2826) rotate(-45)" font-size="43.3" fill="#fff" fill-opacity="0.9">e-plan.gov.tr</text>
<text transform="translate(1143.4,730) scale(1,1.2826) rotate(-45)" font-size="43.3" fill="#fff" fill-opacity="0.9">e-plan.gov.tr</text>
<text transform="translate(1396.8,730) scale(1,1.2826) rotate(-45)" font-size="43.3" fill="#fff" fill-opacity="0.9">e-plan.gov.tr</text>
<text x="468.400" y="555.900" font-size="11.700" fill="#8c8c93" text-anchor="middle" opacity="0.75">Yavrucak</text>
<text x="481.700" y="377.500" font-size="11.700" fill="#9a8a80" text-anchor="middle" opacity="0.7">Hacıhasan</text>
<text x="508" y="24.912" font-size="11.7" fill="#8c8c93" text-anchor="middle" stroke="#f7f7f8" stroke-width="2.2" paint-order="stroke" stroke-linejoin="round" >Ahlatlıbel</text>
<text x="515.5" y="61.512" font-size="11.7" fill="#8c8c93" text-anchor="middle" stroke="#f7f7f8" stroke-width="2.2" paint-order="stroke" stroke-linejoin="round" >Taşpınar</text>
<text x="438.4" y="92.512" font-size="11.7" fill="#8c8c93" text-anchor="middle" stroke="#f7f7f8" stroke-width="2.2" paint-order="stroke" stroke-linejoin="round" >Kızılcaşar</text>
<text x="894.6" y="123.512" font-size="11.7" fill="#8c8c93" text-anchor="middle" stroke="#f7f7f8" stroke-width="2.2" paint-order="stroke" stroke-linejoin="round" >Karataş</text>
<text x="887.8" y="183.512" font-size="11.7" fill="#8c8c93" text-anchor="middle" stroke="#f7f7f8" stroke-width="2.2" paint-order="stroke" stroke-linejoin="round" >Yaylabağ</text>
<text x="410" y="285.212" font-size="11.7" fill="#8c8c93" text-anchor="middle" stroke="#f7f7f8" stroke-width="2.2" paint-order="stroke" stroke-linejoin="round" >Hacılar</text>
<text x="725.8" y="411.912" font-size="11.7" fill="#8c8c93" text-anchor="middle" stroke="#f7f7f8" stroke-width="2.2" paint-order="stroke" stroke-linejoin="round" >Karaoğlan</text>
<text x="909.5" y="588.512" font-size="11.7" fill="#8c8c93" text-anchor="middle" stroke="#f7f7f8" stroke-width="2.2" paint-order="stroke" stroke-linejoin="round" >Beynam</text>
<text x="1193" y="284.912" font-size="11.7" fill="#8c8c93" text-anchor="middle" stroke="#f7f7f8" stroke-width="2.2" paint-order="stroke" stroke-linejoin="round" >Kömürcü</text>
<text x="1180" y="381.912" font-size="11.7" fill="#8c8c93" text-anchor="middle" stroke="#f7f7f8" stroke-width="2.2" paint-order="stroke" stroke-linejoin="round" >Karahasanlı</text>
<text x="1404" y="429.212" font-size="11.7" fill="#8c8c93" text-anchor="middle" stroke="#f7f7f8" stroke-width="2.2" paint-order="stroke" stroke-linejoin="round" >Yayla</text>
<text x="1529" y="369.212" font-size="11.7" fill="#8c8c93" text-anchor="middle" stroke="#f7f7f8" stroke-width="2.2" paint-order="stroke" stroke-linejoin="round" >Akarlar</text>
<text x="1240" y="580.912" font-size="11.7" fill="#8c8c93" text-anchor="middle" stroke="#f7f7f8" stroke-width="2.2" paint-order="stroke" stroke-linejoin="round" >Çavuşlu</text>
<text x="1524" y="580.212" font-size="11.7" fill="#8c8c93" text-anchor="middle" stroke="#f7f7f8" stroke-width="2.2" paint-order="stroke" stroke-linejoin="round" >Kerişli</text>
<text x="707.5" y="600.912" font-size="11.7" fill="#8c8c93" text-anchor="middle" stroke="#f7f7f8" stroke-width="2.2" paint-order="stroke" stroke-linejoin="round" >Oğulbey</text>
<text x="435" y="676.512" font-size="11.7" fill="#8c8c93" text-anchor="middle" stroke="#f7f7f8" stroke-width="2.2" paint-order="stroke" stroke-linejoin="round" >Gökçehüyük</text>
<text x="1433" y="685.212" font-size="11.7" fill="#8c8c93" text-anchor="middle" stroke="#f7f7f8" stroke-width="2.2" paint-order="stroke" stroke-linejoin="round" >Küseli</text>
<text x="1096" y="705.212" font-size="11.7" fill="#8c8c93" text-anchor="middle" stroke="#f7f7f8" stroke-width="2.2" paint-order="stroke" stroke-linejoin="round" >Karaali Merkez</text>
<text x="376" y="619.200" font-size="11.700" fill="#8c8c93" text-anchor="end" stroke="#f7f7f8" stroke-width="2.200" paint-order="stroke">ımuratlı</text>
<text x="284" y="453.500" font-size="11.700" fill="#8c8c93" text-anchor="end" stroke="#f7f7f8" stroke-width="2.200" paint-order="stroke">aran</text>
<text x="350.700" y="149.200" font-size="11.700" fill="#8c8c93" text-anchor="end" stroke="#f7f7f8" stroke-width="2.200" paint-order="stroke">cek</text>
<text x="411.700" y="421.900" font-size="11.700" fill="#9a8a80" text-anchor="end" opacity="0.75">allıkpınar</text>
<text x="871.700" y="355.900" font-size="11.700" fill="#8c8c93" text-anchor="end" stroke="#f7f7f8" stroke-width="2.200" paint-order="stroke">urtbey</text>
<text x="1055" y="61" font-size="11.700" fill="#8c8c93" text-anchor="middle">Yakupabdal</text>
<text x="586.700" y="58.300" font-size="11.200" font-weight="bold" fill="#7d7d84" fill-opacity="0.85">ODTÜ Ormanı</text><text x="772.500" y="55.900" font-size="11.700" fill="#7f8a88" text-anchor="middle" fill-opacity="0.85">Aşağı Dikmen</text>
<text x="649.500" y="212.300" font-size="14.900" font-weight="bold" fill="#5f8f92" fill-opacity="0.85" text-anchor="middle">Gölbaşı</text>
<text x="578" y="291" font-size="12" font-style="italic" fill="#5aa9c9" fill-opacity="0.7">Mogan G</text>
<text x="677" y="86.500" font-size="11" font-style="italic" fill="#4f9f6a" fill-opacity="0.8">Eymir G</text>
<text x="552" y="248" font-size="10.500" fill="#8d6a48" text-anchor="middle" fill-opacity="0.9">Karşıyaka</text>
<text transform="translate(1108,373) rotate(-80)" font-size="9.3" font-style="italic" fill="#4580c8" letter-spacing="0.35" text-anchor="middle" stroke="#f7f7f8" stroke-width="1.500" paint-order="stroke">Suluboğaz Deresi</text>
<text transform="translate(1320,426) rotate(76)" font-size="9.3" font-style="italic" fill="#4580c8" letter-spacing="0.35" text-anchor="middle" stroke="#f7f7f8" stroke-width="1.500" paint-order="stroke">Şevlik Deresi</text>
<text transform="translate(1074,518) rotate(33)" font-size="9.3" font-style="italic" fill="#4580c8" letter-spacing="0.35" text-anchor="middle" stroke="#f7f7f8" stroke-width="1.500" paint-order="stroke">Karaağaç Deresi</text>
<text transform="translate(1251,658) rotate(33)" font-size="9.3" font-style="italic" fill="#4580c8" letter-spacing="0.35" text-anchor="middle" stroke="#f7f7f8" stroke-width="1.500" paint-order="stroke">Söğütözü Deresi</text>
<text x="1588" y="567" font-size="8.500" font-style="italic" fill="#4f86c8">Çu</text>
</svg>
<div id="side">
  <div id="q">Konumları ara</div>
  <div id="tkgm">TKGM<br>Sorgu</div>
  <div id="cv"><svg class="abs" style="left:80px;top:7px" width="16" height="16" viewBox="0 0 16 16"><circle cx="8" cy="8" r="6.8" fill="none" stroke="#fff" stroke-width="1.4"/><path d="M8 4.4v7.2M4.4 8h7.2" stroke="#fff" stroke-width="1.5" fill="none"/></svg><span style="position:absolute;left:101.5px;top:-0.5px">Coğrafi Veriler</span></div>
  <div class="sep" style="top:85px"></div>
  <div class="hd" style="left:8px">KATMANLAR (1)</div>
  <svg class="abs" style="left:107px;top:96px" width="10" height="10" viewBox="0 0 10 10"><circle cx="5" cy="5" r="4" fill="none" stroke="#fff" stroke-width="1"/><path d="M2.8 5h4.4" stroke="#fff" stroke-width="1"/></svg>
  <div class="hd" style="left:120px;font-size:8.85px">Hepsini Kaldır</div>
  <div class="hd" style="left:195px;font-size:8.85px">Hepsini Kapat</div>
  <div class="sep" style="top:114px"></div>
  <div id="card">
    <div class="cb"><i></i></div>
    <div class="t">Çevre Düzeni Planı (E-PLAN - Kesinleşmiş) (MEKANSAL PLANLAMA GENEL MÜDÜRLÜĞÜ)</div>
    <div class="dd"><i></i></div>
    <div class="ln"></div>
    <div class="op">Opasite: 80 %</div>
    <div class="tr"></div><div class="tf"></div><div class="th"></div>
    <div class="mb"><i style="top:5.5px"></i><i style="top:10px"></i><i style="top:14.5px"></i></div>
  </div>
</div>
<div id="x"><svg width="22" height="24" viewBox="0 0 22 24"><path d="M5.5 6.5l11 11M16.5 6.5l-11 11" stroke="#d0d0d0" stroke-width="1.6" fill="none"/></svg></div>
<div id="ts"><div class="in">Aramak için yazın</div><div class="bt">Veri Ara</div></div>

<div class="tb" style="left:1184px;width:97px"><svg style="left:9px;top:6px" width="14" height="13" viewBox="0 0 14 13"><path d="M7 0.5L13 3.5 7 6.5 1 3.5z" fill="#cfd3da"/><path d="M1.5 6.3L7 9 12.5 6.3M1.5 9L7 11.8 12.5 9" fill="none" stroke="#cfd3da" stroke-width="1.5"/></svg><span style="left:27px">Harita Ayarları</span></div>
<div class="tb" style="left:1282px;width:66px"><span style="left:12px;font-size:8px;color:#b9bdc6">?</span><span style="left:27px">Yardım</span></div>
<div class="tb" style="left:1349px;width:48px"><svg style="left:8px;top:6px" width="12" height="12" viewBox="0 0 12 12"><g fill="none" stroke="#cfd3da" stroke-width="1"><circle cx="6" cy="6" r="5"/><ellipse cx="6" cy="6" rx="2.3" ry="5"/><path d="M1 6h10M1.8 3.5h8.4M1.8 8.5h8.4"/></g></svg><span style="left:27px">TR</span></div>
<div class="tb" style="left:1405px;width:95px"><svg style="left:10px;top:6px" width="12" height="12" viewBox="0 0 12 12"><g fill="none" stroke="#cfd3da" stroke-width="1.1"><path d="M5 1.5H1v9.5h9.5V7"/><path d="M7 1h4v4M11 1L5.5 6.5"/></g></svg><span style="left:27px">Ekran Kaydet</span></div>
<div class="tb" style="left:1501px;width:88px"><svg style="left:8px;top:6px" width="13" height="12" viewBox="0 0 13 12"><g fill="none" stroke="#cfd3da" stroke-width="1.1"><path d="M1 1h11v7.5H8L6.5 10.5 5 8.5H1z"/><path d="M3.5 3.7h6M3.5 5.8h4"/></g></svg><span style="left:27px">Geri Bildirim</span></div>

<div id="pn">
  <div class="r1"></div><div class="r2"></div><div class="r3"></div>
  <div class="tx" style="left:6px;top:8px">Konum/Bilgi Al</div>
  <svg class="abs" style="left:90px;top:13px" width="9" height="6" viewBox="0 0 9 6"><path d="M0.5 0.5h8L4.5 5.5z" fill="#fff"/></svg>
  <svg class="abs" style="left:498px;top:9px" width="12" height="12" viewBox="0 0 12 12"><path d="M1.5 1.5l9 9M10.5 1.5l-9 9" stroke="#fff" stroke-width="2.2" fill="none"/></svg>
  <div class="tx" id="r2t" style="left:6.4px;top:38px;font-size:10.8px">Çevre Düzeni Planı (E-PLAN - Kesinleşmiş) (MEKANSAL PLANLAMA GENEL MÜDÜRLÜĞÜ) - WMS</div>
  <svg class="abs" style="left:500px;top:42px" width="9" height="6" viewBox="0 0 9 6"><path d="M0.5 0.5h8L4.5 5.5z" fill="#fff"/></svg>
  <table><tr><td class="k">globalid</td><td class="v">5c31ed8b-5e75-4acd-94a2-7331933dd77b</td></tr><tr><td class="k">acik_yesil_tip</td><td class="v">0</td></tr><tr><td class="k">planglobalid</td><td class="v">13c4e51a-61ae-4da1-af33-93342a8c5fc9</td></tr></table>
  <div class="dl">Bu Tabloyu İndir</div>
  <svg class="abs" style="left:488px;top:155px" width="20" height="11" viewBox="0 0 20 11"><path d="M1 1h18L10 10.5z" fill="#333"/></svg>
  <div class="tx" style="left:7.6px;top:187px;font-size:10.85px">Enlem/Boylam</div>
  <div class="tx" id="co" style="right:24px;top:189px;font-size:10.8px">39.74150°N, 32.79025°E</div>
  <svg class="abs" style="left:494px;top:184px" width="14" height="17" viewBox="0 0 14 17"><path d="M7 1.2C4 1.2 1.8 3.4 1.8 6.2 1.8 9.8 7 15.6 7 15.6S12.200 9.8 12.2 6.2C12.2 3.400 10 1.200 7 1.200z" fill="none" stroke="#fff" stroke-width="1.4"/><circle cx="7" cy="6.2" r="1.900" fill="none" stroke="#fff" stroke-width="1.2"/></svg>
</div>

<div id="cp"><svg width="49" height="49" viewBox="0 0 49 49"><circle cx="24.5" cy="24.5" r="14" fill="#f0f0f2"/><circle cx="24.5" cy="24.5" r="10.500" fill="#5a6378"/><g stroke="#fff" stroke-width="1.4" fill="none"><path d="M24.5 18v13M18 24.5h13"/><path d="M22.5 20l2-2.300 2 2.300M22.500 29l2 2.300 2-2.300M20 22.500l-2.300 2 2.300 2M29 22.500l2.300 2-2.300 2"/></g><g stroke="#777" stroke-width="1"><path d="M24.500 43v3.500M3 24.500h3.500M43 24.500h3.500"/></g><g fill="#777"><circle cx="9" cy="11" r=".8"/><circle cx="40" cy="11" r=".8"/><circle cx="9" cy="38" r=".8"/><circle cx="40" cy="38" r=".8"/></g><text x="24.500" y="6.500" font-size="4" fill="#777" text-anchor="middle" font-family="Liberation Sans, sans-serif">N</text></svg></div>
<div id="zm"><svg width="24" height="75" viewBox="0 0 24 75"><path d="M7.500 10.500h9M12 6v9" stroke="#4a4f5c" stroke-width="1.3" fill="none"/><g fill="none" stroke="#5a6378" stroke-width="1.2"><circle cx="12" cy="36" r="6.800"/><ellipse cx="12" cy="36" rx="3" ry="6.800"/><path d="M5.200 36h13.600M12 29.200v13.600M6.200 32.500h11.600M6.200 39.500h11.600"/></g><path d="M8 61.500h8" stroke="#4a4f5c" stroke-width="1.3"/></svg></div>

<div class="rb" style="top:463px"><svg width="23" height="22" viewBox="0 0 23 22"><path d="M11.500 3.500c-2.700 0-4.700 2-4.700 4.500 0 3.300 4.700 8.700 4.700 8.700s4.700-5.400 4.700-8.700c0-2.500-2-4.500-4.700-4.500z" fill="none" stroke="#4a5060" stroke-width="1.400"/><circle cx="11.500" cy="8.200" r="1.800" fill="none" stroke="#4a5060" stroke-width="1.200"/></svg></div>
<div class="rb" style="top:494.500px"><svg width="23" height="22" viewBox="0 0 23 22"><path d="M4.500 11c2-3 4.400-4.300 7-4.300s5 1.300 7 4.300c-2 3-4.400 4.300-7 4.300s-5-1.300-7-4.300z" fill="none" stroke="#4a5060" stroke-width="1"/><circle cx="11.500" cy="11" r="2.800" fill="none" stroke="#4a5060" stroke-width="1"/><circle cx="11.500" cy="11" r="1.200" fill="#4a5060"/></svg></div>
<div class="rb" style="top:526px"><svg width="23" height="22" viewBox="0 0 23 22"><circle cx="11.500" cy="5.500" r="1.600" fill="#4a5060"/><path d="M7.500 8h8v2h-2.300v6.500h-1.400v-3.500h-.6v3.500h-1.400V10H7.500z" fill="#4a5060"/></svg></div>
<div class="rb" style="top:557.500px"><svg width="23" height="22" viewBox="0 0 23 22"><g fill="none" stroke="#4a5060" stroke-width="1.200"><path d="M13 4.500h5.500v5.500M18.500 4.500l-5.500 5.500M4.500 12v5.500h5.500M4.500 17.500l5.500-5.500"/></g></svg></div>
<div class="rb" style="top:589px"><svg width="23" height="22" viewBox="0 0 23 22"><g fill="#4a5060"><path d="M9.300 3.500h4.400v3.700L11.500 9.400 9.300 7.200z"/><path d="M9.300 18.500h4.400v-3.700l-2.200-2.200-2.200 2.200z"/><path d="M4 8.800v4.400h3.700l2.200-2.200-2.200-2.200z"/><path d="M19 8.800v4.400h-3.700l-2.200-2.200 2.200-2.200z"/></g></svg></div>
<div class="rb" style="top:620.500px"><svg width="23" height="22" viewBox="0 0 23 22"><circle cx="11.500" cy="11" r="7.300" fill="#4a5060"/><g stroke="#fff" stroke-width="1.200" fill="none"><path d="M11.500 6.500v9M7 11h9"/><path d="M10 8l1.500-1.600L13 8M10 14l1.500 1.600L13 14M8.500 9.500L7 11l1.500 1.500M14.500 9.500L16 11l-1.500 1.500"/></g></svg></div>

<div id="bb">
  <span style="left:34px">Enlem</span><span style="left:65px">39.80892°N</span><span style="left:126px">Boylam</span><span style="left:161.500px">32.67119°E</span><span style="left:223px">Yükseklik</span><span style="left:272px">0m</span><span style="left:323px">1/123901</span>
  <div class="abs" style="left:304px;top:14px;width:75px;height:1px;background:#ddd"></div>
  <span style="left:953.500px">EPSG:4326 Altlık Harita, Harita Genel Müdürlüğü (HGM) tarafından sağlanmaktadır.</span>
</div>
</div>
</body>
</html>
